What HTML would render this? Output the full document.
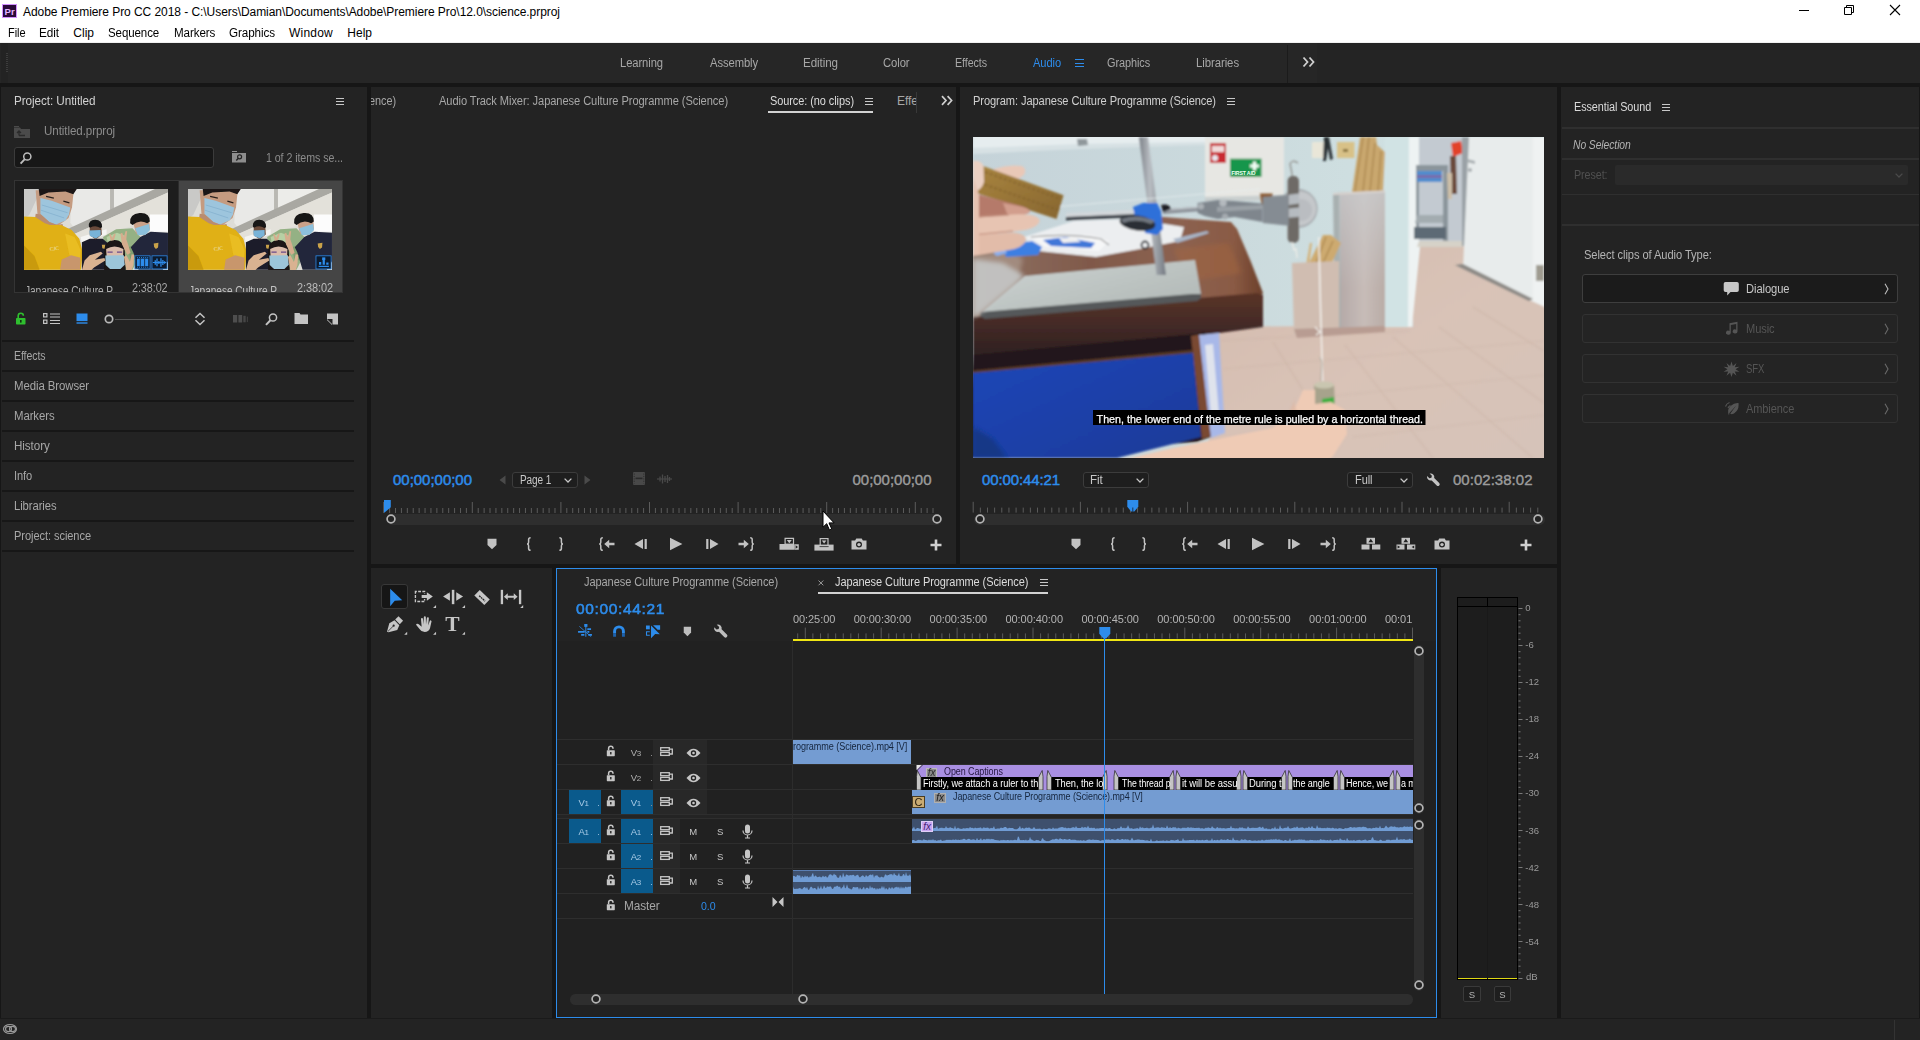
<!DOCTYPE html>
<html lang="en"><head><meta charset="utf-8"><title>Adobe Premiere Pro CC 2018 - science.prproj</title>
<style>
html,body{margin:0;padding:0;background:#161616;}
body{width:1920px;height:1040px;position:relative;overflow:hidden;font-family:"Liberation Sans",sans-serif;}
.t{position:absolute;white-space:nowrap;display:block;}
svg{overflow:visible;display:block;}
</style></head><body>
<div style="position:absolute;left:0px;top:0px;width:1920px;height:43px;background:#ffffff;"></div>
<div style="position:absolute;left:0px;top:42px;width:1920px;height:1px;background:#f0f0f0;"></div>
<div style="position:absolute;left:2px;top:4px;width:15px;height:14px;background:#2a0a3a;border:1px solid #d291ff;box-sizing:border-box;"></div>
<span class="t" style="left:4.50px;top:7px;font-size:9.5px;line-height:10.92px;color:#e3b6ff;letter-spacing:0.233px;font-weight:bold;">Pr</span>
<span class="t" style="left:23.00px;top:6px;font-size:12px;line-height:13.79px;color:#000;letter-spacing:-0.057px;">Adobe Premiere Pro CC 2018 - C:\Users\Damian\Documents\Adobe\Premiere Pro\12.0\science.prproj</span>
<svg style="position:absolute;left:1790px;top:0px;" width="130" height="30" viewBox="0 0 130 30"><path d="M9 10.5h10" stroke="#000" stroke-width="1" fill="none"/><path d="M54.5 7.5h7v7h-7zM56.5 7.5v-2h7v7h-2" stroke="#000" stroke-width="1" fill="none"/><path d="M100 5l10 10M110 5l-10 10" stroke="#000" stroke-width="1.1" fill="none"/></svg>
<span class="t" style="left:8.00px;top:27px;font-size:12px;line-height:13.79px;color:#000;letter-spacing:-0.073px;transform:scaleX(0.9188);transform-origin:0 0;">File</span>
<span class="t" style="left:39.00px;top:27px;font-size:12px;line-height:13.79px;color:#000;letter-spacing:-0.078px;transform:scaleX(0.9819);transform-origin:0 0;">Edit</span>
<span class="t" style="left:73.30px;top:27px;font-size:12px;line-height:13.79px;color:#000;letter-spacing:0.007px;">Clip</span>
<span class="t" style="left:108.30px;top:27px;font-size:12px;line-height:13.79px;color:#000;letter-spacing:-0.101px;transform:scaleX(0.9598);transform-origin:0 0;">Sequence</span>
<span class="t" style="left:173.50px;top:27px;font-size:12px;line-height:13.79px;color:#000;letter-spacing:-0.093px;transform:scaleX(0.9675);transform-origin:0 0;">Markers</span>
<span class="t" style="left:229.00px;top:27px;font-size:12px;line-height:13.79px;color:#000;letter-spacing:-0.090px;transform:scaleX(0.9725);transform-origin:0 0;">Graphics</span>
<span class="t" style="left:289.00px;top:27px;font-size:12px;line-height:13.79px;color:#000;letter-spacing:0.220px;">Window</span>
<span class="t" style="left:347.30px;top:27px;font-size:12px;line-height:13.79px;color:#000;">Help</span>
<div style="position:absolute;left:0px;top:43px;width:1920px;height:40px;background:#262626;"></div>
<div style="position:absolute;left:1px;top:43px;width:7px;height:40px;background:#232323;"></div>
<div style="position:absolute;left:1317px;top:43px;width:603px;height:40px;background:#242424;"></div>
<div style="position:absolute;left:1287px;top:45px;width:1px;height:38px;background:#1b1b1b;"></div>
<div style="position:absolute;left:6px;top:53px;width:2px;height:1px;background:#3c3c3c;"></div>
<div style="position:absolute;left:6px;top:55px;width:2px;height:1px;background:#3c3c3c;"></div>
<div style="position:absolute;left:6px;top:57px;width:2px;height:1px;background:#3c3c3c;"></div>
<div style="position:absolute;left:6px;top:59px;width:2px;height:1px;background:#3c3c3c;"></div>
<div style="position:absolute;left:6px;top:61px;width:2px;height:1px;background:#3c3c3c;"></div>
<div style="position:absolute;left:6px;top:63px;width:2px;height:1px;background:#3c3c3c;"></div>
<div style="position:absolute;left:6px;top:65px;width:2px;height:1px;background:#3c3c3c;"></div>
<div style="position:absolute;left:6px;top:67px;width:2px;height:1px;background:#3c3c3c;"></div>
<div style="position:absolute;left:6px;top:69px;width:2px;height:1px;background:#3c3c3c;"></div>
<div style="position:absolute;left:6px;top:71px;width:2px;height:1px;background:#3c3c3c;"></div>
<span class="t" style="left:620.00px;top:57px;font-size:12px;line-height:13.79px;color:#a7a7a7;letter-spacing:-0.088px;transform:scaleX(0.9346);transform-origin:0 0;">Learning</span>
<span class="t" style="left:710.00px;top:57px;font-size:12px;line-height:13.79px;color:#a7a7a7;letter-spacing:-0.098px;transform:scaleX(0.9369);transform-origin:0 0;">Assembly</span>
<span class="t" style="left:803.00px;top:57px;font-size:12px;line-height:13.79px;color:#a7a7a7;letter-spacing:-0.079px;transform:scaleX(0.9684);transform-origin:0 0;">Editing</span>
<span class="t" style="left:882.50px;top:57px;font-size:12px;line-height:13.79px;color:#a7a7a7;letter-spacing:-0.086px;transform:scaleX(0.9382);transform-origin:0 0;">Color</span>
<span class="t" style="left:955.00px;top:57px;font-size:12px;line-height:13.79px;color:#a7a7a7;letter-spacing:-0.078px;transform:scaleX(0.8910);transform-origin:0 0;">Effects</span>
<span class="t" style="left:1033.00px;top:57px;font-size:12px;line-height:13.79px;color:#2d8ceb;letter-spacing:-0.092px;transform:scaleX(0.9262);transform-origin:0 0;">Audio</span>
<span class="t" style="left:1107.00px;top:57px;font-size:12px;line-height:13.79px;color:#a7a7a7;letter-spacing:-0.090px;transform:scaleX(0.9091);transform-origin:0 0;">Graphics</span>
<span class="t" style="left:1196.00px;top:57px;font-size:12px;line-height:13.79px;color:#a7a7a7;letter-spacing:-0.077px;transform:scaleX(0.9486);transform-origin:0 0;">Libraries</span>
<div style="position:absolute;left:1075px;top:59.0px;width:9px;height:1.2px;background:#2d8ceb;"></div>
<div style="position:absolute;left:1075px;top:62.5px;width:9px;height:1.2px;background:#2d8ceb;"></div>
<div style="position:absolute;left:1075px;top:66.0px;width:9px;height:1.2px;background:#2d8ceb;"></div>
<svg style="position:absolute;left:1302px;top:56px;" width="14" height="12" viewBox="0 0 14 12"><path d="M1.5 1.5l4 4.5-4 4.5M7.5 1.5l4 4.5-4 4.5" stroke="#cfcfcf" stroke-width="1.8" fill="none"/></svg>
<div style="position:absolute;left:1px;top:87px;width:366px;height:931px;background:#232323;"></div>
<div style="position:absolute;left:371px;top:87px;width:585px;height:477px;background:#232323;"></div>
<div style="position:absolute;left:960px;top:87px;width:597px;height:477px;background:#232323;"></div>
<div style="position:absolute;left:1561px;top:87px;width:358px;height:931px;background:#232323;"></div>
<div style="position:absolute;left:371px;top:568px;width:181px;height:450px;background:#232323;"></div>
<div style="position:absolute;left:556px;top:568px;width:881px;height:450px;background:#232323;"></div>
<div style="position:absolute;left:1441px;top:568px;width:116px;height:450px;background:#232323;"></div>
<div style="position:absolute;left:0px;top:1018px;width:1920px;height:22px;background:#232323;"></div>
<div style="position:absolute;left:0px;top:1018px;width:1920px;height:1px;background:#1a1a1a;"></div>
<div style="position:absolute;left:1894px;top:1020px;width:1px;height:20px;background:#333;"></div>
<svg style="position:absolute;left:2px;top:1021px;" width="18" height="14" viewBox="0 0 18 14"><ellipse cx="8" cy="8" rx="6.5" ry="4.5" fill="none" stroke="#9a9a9a" stroke-width="1.2"/><ellipse cx="6.5" cy="8" rx="3" ry="2.6" fill="none" stroke="#9a9a9a" stroke-width="1.1"/><ellipse cx="10.5" cy="8" rx="3" ry="2.6" fill="none" stroke="#9a9a9a" stroke-width="1.1"/></svg>
<span class="t" style="left:14.00px;top:95px;font-size:12px;line-height:13.79px;color:#d2d2d2;letter-spacing:-0.075px;transform:scaleX(0.9768);transform-origin:0 0;">Project: Untitled</span>
<div style="position:absolute;left:335.5px;top:98px;width:8.5px;height:1.2px;background:#c8c8c8;"></div>
<div style="position:absolute;left:335.5px;top:101px;width:8.5px;height:1.2px;background:#c8c8c8;"></div>
<div style="position:absolute;left:335.5px;top:104px;width:8.5px;height:1.2px;background:#c8c8c8;"></div>
<svg style="position:absolute;left:14px;top:126px;" width="16" height="12" viewBox="0 0 16 12"><path d="M0 1.5h6l1 1.5h9v9h-16z" fill="#4b4b4b"/><path d="M0 0h5v1h-5z" fill="#4b4b4b"/><path d="M5 9.5v-4M3 7l2-2 2 2M5 9.5h6" stroke="#2a2a2a" stroke-width="1.3" fill="none"/></svg>
<span class="t" style="left:44.00px;top:125px;font-size:12px;line-height:13.79px;color:#8c8c8c;letter-spacing:-0.075px;transform:scaleX(0.9649);transform-origin:0 0;">Untitled.prproj</span>
<div style="position:absolute;left:14px;top:147px;width:200px;height:21px;background:#171717;border:1px solid #3b3b3b;border-radius:3px;box-sizing:border-box;"></div>
<svg style="position:absolute;left:19px;top:151px;" width="14" height="14" viewBox="0 0 14 14"><circle cx="8.3" cy="5.5" r="3.6" fill="none" stroke="#bdbdbd" stroke-width="1.5"/><path d="M5.8 8.2l-4.2 4.4" stroke="#bdbdbd" stroke-width="1.9" fill="none"/></svg>
<svg style="position:absolute;left:232px;top:151px;" width="14" height="12" viewBox="0 0 14 12"><path d="M0 0h5v1h-5zM0 2h14v9.5h-14z" fill="#8d8d8d"/><circle cx="7.6" cy="5.8" r="2" fill="none" stroke="#232323" stroke-width="1.2"/><path d="M6.3 7.3l-2 2.2" stroke="#232323" stroke-width="1.3"/></svg>
<span class="t" style="left:266.00px;top:152px;font-size:12px;line-height:13.79px;color:#8c8c8c;letter-spacing:-0.073px;transform:scaleX(0.8880);transform-origin:0 0;">1 of 2 items se...</span>
<div style="position:absolute;left:14px;top:179.5px;width:329px;height:113px;background:#1d1d1d;border:1px solid #343434;box-sizing:border-box;"></div>
<div style="position:absolute;left:179px;top:180.5px;width:163px;height:111.5px;background:#454545;"></div>
<div style="position:absolute;left:178px;top:180.5px;width:1px;height:111.5px;background:#2c2c2c;"></div>
<svg style="position:absolute;left:24px;top:189px;overflow:hidden;" width="144" height="81" viewBox="45 45 1665 937"><defs><filter id="tb1" x="-5%" y="-5%" width="110%" height="110%"><feGaussianBlur stdDeviation="5"/></filter><clipPath id="tc1"><rect x="45" y="45" width="1665" height="937"/></clipPath></defs><g clip-path="url(#tc1)"><g filter="url(#tb1)"><rect x="0" y="0" width="1760" height="1040" fill="#dddcd7"/><path d="M45 45h200l-140 300-60 40z" fill="#c9c9c7"/><path d="M600 45h440v290l-400 180-60-80z" fill="#e9e9e7"/><path d="M1085 45h480l-480 215z" fill="#ecece9"/><path d="M1040 45h45v225l-45 20z" fill="#b9b8b3"/><path d="M1560 45h150v40l-1130 500-50-70z" fill="#a9a8a2"/><path d="M1710 85v250l-1000 330-130-80z" fill="#e3e1da"/><path d="M1500 340h210v200h-210z" fill="#fcfcfc"/><path d="M700 600l300-90 0 60-290 90z" fill="#f4f4f2"/><path d="M960 600l150-90 190-10 100 110-40 250-60 120h-320z" fill="#94b184"/><path d="M1000 600l120-50 100 40-60 90-140 20z" fill="#b7d0a4"/><path d="M1250 720l110-50 20 150-100 80z" fill="#7f9f6f"/><path d="M180 60h440l-20 200-40 120-110 80-240 10z" fill="#c59b80"/><path d="M215 45h440l-40 60-90-30-200 10-100 40z" fill="#1a1716"/><path d="M300 130l90 20M500 185l70 20" stroke="#2a211d" stroke-width="14"/><path d="M235 150l130 30 215 80-15 80-40 70-110 45-80-30-100-90z" fill="#9dc5dd"/><path d="M250 230l300 90M240 290l270 90" stroke="#86b2cf" stroke-width="10" fill="none"/><path d="M180 330l60 10 100 90 90 30 60-10 10 40-180 10-150-100z" fill="#b98c70"/><path d="M45 362l130 8 110 70 60 22 130-2 120 60 90 100 38 150-18 210h-660z" fill="#e0b012"/><path d="M45 700l120 120 60 160h-180z" fill="#c99a0e"/><path d="M520 560l110 40 70 150-10 120-120-60z" fill="#e9bd22"/><path d="M480 860l110-50 110 30-8 140h-230z" fill="#c8966c"/><path d="M715 660l90-40 150 0 70 60 30 300h-340z" fill="#1b1c29"/><path d="M805 440h130l10 130-70 60-70-50z" fill="#6b4b3b"/><path d="M795 480q-5-80 75-78t78 85l-20 10q-55-40-120-5z" fill="#141213"/><path d="M800 525l130-5 2 60-55 38-70-28z" fill="#78b3d8"/><path d="M945 690l40 0-5 50-30-10z" fill="#c8a14a"/><path d="M1280 720l110-120 120-60 200 10v330l-60 100h-280l-60-200z" fill="#21253b"/><path d="M1300 400l190-20 10 120-60 80-100-20z" fill="#caa189"/><path d="M1272 440q-10-110 110-118t118 100l-30 20q-90-50-170 20z" fill="#151314"/><path d="M1330 500l160-50 12 70-50 55-90 5z" fill="#8cc0dc"/><path d="M1545 675l55-8-5 55-25 18-20-25z" fill="#c9a24a"/><path d="M970 800q0-165 120-165t122 160l10 190h-250z" fill="#1a1617"/><path d="M995 740q95-60 200 0l-5 90h-190z" fill="#dbbcab"/><path d="M985 815l215-5 10 110-50 50h-120l-50-45z" fill="#9cc5d9"/><path d="M1010 775h60M1120 775h60" stroke="#6a4a8a" stroke-width="14"/><path d="M715 982l30-110 60-60 130-40 20 20-90 70 110-20 10 30-130 80-30 30z" fill="#d9b291"/><path d="M1200 830l30-20 40 80 20-90 30 5-10 120-20 60h-60z" fill="#d9b291"/><path d="M1160 560l20-10 20 50 20-70 18 5-10 90 20 60 30 100-40 20-60-120z" fill="#d5ad8d"/><path d="M1030 570l15-5 20 45 25-50 15 8-20 70-35 5z" fill="#d5ad8d"/></g><text x="345" y="760" font-size="62" fill="#efe6c8" font-family="Liberation Serif, serif" transform="rotate(-6 345 760)">CJC</text><rect x="1328" y="818" width="175" height="152" fill="#0c1a2e" stroke="#2d8ceb" stroke-width="9"/><rect x="1350" y="850" width="132" height="88" fill="#2d8ceb"/><path d="M1390 850v88M1440 850v88" stroke="#0c1a2e" stroke-width="9"/><path d="M1350 838h132M1350 950h132" stroke="#2d8ceb" stroke-width="10" stroke-dasharray="13 11"/><rect x="1525" y="818" width="175" height="152" fill="#0c1a2e" stroke="#2d8ceb" stroke-width="9"/><path d="M1535 895h155" stroke="#2d8ceb" stroke-width="12"/><path d="M1563 870v50M1583 850v90M1605 878v34M1629 845v100M1651 865v60M1671 880v30" stroke="#2d8ceb" stroke-width="15"/></g></svg>
<svg style="position:absolute;left:188px;top:189px;overflow:hidden;" width="144" height="81" viewBox="45 45 1665 937"><defs><filter id="tb2" x="-5%" y="-5%" width="110%" height="110%"><feGaussianBlur stdDeviation="5"/></filter><clipPath id="tc2"><rect x="45" y="45" width="1665" height="937"/></clipPath></defs><g clip-path="url(#tc2)"><g filter="url(#tb2)"><rect x="0" y="0" width="1760" height="1040" fill="#dddcd7"/><path d="M45 45h200l-140 300-60 40z" fill="#c9c9c7"/><path d="M600 45h440v290l-400 180-60-80z" fill="#e9e9e7"/><path d="M1085 45h480l-480 215z" fill="#ecece9"/><path d="M1040 45h45v225l-45 20z" fill="#b9b8b3"/><path d="M1560 45h150v40l-1130 500-50-70z" fill="#a9a8a2"/><path d="M1710 85v250l-1000 330-130-80z" fill="#e3e1da"/><path d="M1500 340h210v200h-210z" fill="#fcfcfc"/><path d="M700 600l300-90 0 60-290 90z" fill="#f4f4f2"/><path d="M960 600l150-90 190-10 100 110-40 250-60 120h-320z" fill="#94b184"/><path d="M1000 600l120-50 100 40-60 90-140 20z" fill="#b7d0a4"/><path d="M1250 720l110-50 20 150-100 80z" fill="#7f9f6f"/><path d="M180 60h440l-20 200-40 120-110 80-240 10z" fill="#c59b80"/><path d="M215 45h440l-40 60-90-30-200 10-100 40z" fill="#1a1716"/><path d="M300 130l90 20M500 185l70 20" stroke="#2a211d" stroke-width="14"/><path d="M235 150l130 30 215 80-15 80-40 70-110 45-80-30-100-90z" fill="#9dc5dd"/><path d="M250 230l300 90M240 290l270 90" stroke="#86b2cf" stroke-width="10" fill="none"/><path d="M180 330l60 10 100 90 90 30 60-10 10 40-180 10-150-100z" fill="#b98c70"/><path d="M45 362l130 8 110 70 60 22 130-2 120 60 90 100 38 150-18 210h-660z" fill="#e0b012"/><path d="M45 700l120 120 60 160h-180z" fill="#c99a0e"/><path d="M520 560l110 40 70 150-10 120-120-60z" fill="#e9bd22"/><path d="M480 860l110-50 110 30-8 140h-230z" fill="#c8966c"/><path d="M715 660l90-40 150 0 70 60 30 300h-340z" fill="#1b1c29"/><path d="M805 440h130l10 130-70 60-70-50z" fill="#6b4b3b"/><path d="M795 480q-5-80 75-78t78 85l-20 10q-55-40-120-5z" fill="#141213"/><path d="M800 525l130-5 2 60-55 38-70-28z" fill="#78b3d8"/><path d="M945 690l40 0-5 50-30-10z" fill="#c8a14a"/><path d="M1280 720l110-120 120-60 200 10v330l-60 100h-280l-60-200z" fill="#21253b"/><path d="M1300 400l190-20 10 120-60 80-100-20z" fill="#caa189"/><path d="M1272 440q-10-110 110-118t118 100l-30 20q-90-50-170 20z" fill="#151314"/><path d="M1330 500l160-50 12 70-50 55-90 5z" fill="#8cc0dc"/><path d="M1545 675l55-8-5 55-25 18-20-25z" fill="#c9a24a"/><path d="M970 800q0-165 120-165t122 160l10 190h-250z" fill="#1a1617"/><path d="M995 740q95-60 200 0l-5 90h-190z" fill="#dbbcab"/><path d="M985 815l215-5 10 110-50 50h-120l-50-45z" fill="#9cc5d9"/><path d="M1010 775h60M1120 775h60" stroke="#6a4a8a" stroke-width="14"/><path d="M715 982l30-110 60-60 130-40 20 20-90 70 110-20 10 30-130 80-30 30z" fill="#d9b291"/><path d="M1200 830l30-20 40 80 20-90 30 5-10 120-20 60h-60z" fill="#d9b291"/><path d="M1160 560l20-10 20 50 20-70 18 5-10 90 20 60 30 100-40 20-60-120z" fill="#d5ad8d"/><path d="M1030 570l15-5 20 45 25-50 15 8-20 70-35 5z" fill="#d5ad8d"/></g><text x="345" y="760" font-size="62" fill="#efe6c8" font-family="Liberation Serif, serif" transform="rotate(-6 345 760)">CJC</text><rect x="1525" y="818" width="175" height="152" fill="#0c1a2e" stroke="#2d8ceb" stroke-width="9"/><path d="M1555 940h120" stroke="#2d8ceb" stroke-width="14"/><path d="M1573 920v-30M1615 920v-70M1657 920v-24" stroke="#2d8ceb" stroke-width="26"/><rect x="1597" y="836" width="36" height="30" fill="#2d8ceb"/></g></svg>
<div style="position:absolute;left:15px;top:181px;width:327px;height:111px;overflow:hidden;">
<span class="t" style="left:10.00px;top:104px;font-size:12px;line-height:13.79px;color:#b0b0b0;letter-spacing:-0.081px;transform:scaleX(0.8471);transform-origin:0 0;">Japanese Culture P...</span>
<span class="t" style="left:117.00px;top:101px;font-size:12px;line-height:13.79px;color:#a7a7a7;letter-spacing:-0.086px;transform:scaleX(0.9002);transform-origin:0 0;">2:38:02</span>
<span class="t" style="left:174.00px;top:104px;font-size:12px;line-height:13.79px;color:#c2c2c2;letter-spacing:-0.081px;transform:scaleX(0.8471);transform-origin:0 0;">Japanese Culture P...</span>
<span class="t" style="left:282.00px;top:101px;font-size:12px;line-height:13.79px;color:#bcbcbc;letter-spacing:-0.086px;transform:scaleX(0.9128);transform-origin:0 0;">2:38:02</span>
</div>
<svg style="position:absolute;left:15px;top:312px;" width="12" height="13" viewBox="0 0 12 13"><rect x="1" y="6" width="9.5" height="6.5" rx="0.8" fill="#2fbf2f"/><path d="M3.2 6v-2.2a2.6 2.6 0 0 1 5.2 0" fill="none" stroke="#2fbf2f" stroke-width="1.6"/><rect x="5" y="8" width="1.6" height="2.6" fill="#12330f"/></svg>
<svg style="position:absolute;left:43px;top:313px;" width="18" height="12" viewBox="0 0 18 12"><rect x="0.6" y="0.6" width="3.3" height="3.3" fill="none" stroke="#c4c4c4" stroke-width="1.2"/><rect x="0.6" y="7.1" width="3.3" height="3.3" fill="none" stroke="#c4c4c4" stroke-width="1.2"/><path d="M7 1h10M7 4h10M7 7.5h10M7 10.5h10" stroke="#c4c4c4" stroke-width="1.2"/></svg>
<svg style="position:absolute;left:76px;top:313px;" width="12" height="12" viewBox="0 0 12 12"><rect x="0.5" y="0.5" width="11" height="7.6" fill="#2d8ceb"/><rect x="0.5" y="9.3" width="11" height="1.4" fill="#2d8ceb"/></svg>
<div style="position:absolute;left:115px;top:318.5px;width:57px;height:1.2px;background:#525252;"></div>
<svg style="position:absolute;left:103px;top:313px;" width="12" height="12" viewBox="0 0 12 12"><circle cx="6" cy="6" r="3.7" fill="#232323" stroke="#b9b9b9" stroke-width="1.7"/></svg>
<svg style="position:absolute;left:194px;top:312px;" width="12" height="14" viewBox="0 0 12 14"><path d="M1.5 5.8l4.5-4.3 4.5 4.3M1.5 8.2l4.5 4.3 4.5-4.3" fill="none" stroke="#c4c4c4" stroke-width="1.5"/></svg>
<svg style="position:absolute;left:233px;top:314px;" width="17" height="10" viewBox="0 0 17 10"><rect x="0" y="1" width="4.2" height="7.5" fill="#4e4e4e"/><rect x="5.4" y="1" width="3.8" height="7.5" fill="#4e4e4e"/><rect x="10.3" y="1.8" width="2.4" height="6.5" fill="#464646"/><rect x="13.8" y="2.6" width="1.2" height="5.5" fill="#3e3e3e"/></svg>
<svg style="position:absolute;left:264px;top:312px;" width="15" height="15" viewBox="0 0 15 15"><circle cx="9" cy="5.5" r="3.6" fill="none" stroke="#c4c4c4" stroke-width="1.5"/><path d="M6.4 8.3l-4.4 4.6" stroke="#c4c4c4" stroke-width="2"/></svg>
<svg style="position:absolute;left:294px;top:312px;" width="15" height="13" viewBox="0 0 15 13"><path d="M0.5 1h5l1 1.5h7.5v9.5h-13.5z" fill="#c4c4c4"/></svg>
<svg style="position:absolute;left:326px;top:313px;" width="13" height="12" viewBox="0 0 13 12"><path d="M1 0.5h11v11h-5.5v-5.5h-5.5z" fill="#c4c4c4"/><path d="M1 6.6l5 4.9" stroke="#c4c4c4" stroke-width="1"/></svg>
<div style="position:absolute;left:2px;top:339.6px;width:352px;height:2px;background:#171717;"></div>
<span class="t" style="left:14.00px;top:350px;font-size:12px;line-height:13.79px;color:#a7a7a7;letter-spacing:-0.078px;transform:scaleX(0.8770);transform-origin:0 0;">Effects</span>
<div style="position:absolute;left:2px;top:369.6px;width:352px;height:2px;background:#171717;"></div>
<span class="t" style="left:14.00px;top:380px;font-size:12px;line-height:13.79px;color:#a7a7a7;letter-spacing:-0.092px;transform:scaleX(0.9514);transform-origin:0 0;">Media Browser</span>
<div style="position:absolute;left:2px;top:399.6px;width:352px;height:2px;background:#171717;"></div>
<span class="t" style="left:14.00px;top:410px;font-size:12px;line-height:13.79px;color:#a7a7a7;letter-spacing:-0.093px;transform:scaleX(0.9488);transform-origin:0 0;">Markers</span>
<div style="position:absolute;left:2px;top:429.6px;width:352px;height:2px;background:#171717;"></div>
<span class="t" style="left:14.00px;top:440px;font-size:12px;line-height:13.79px;color:#a7a7a7;letter-spacing:-0.080px;transform:scaleX(0.9707);transform-origin:0 0;">History</span>
<div style="position:absolute;left:2px;top:459.6px;width:352px;height:2px;background:#171717;"></div>
<span class="t" style="left:14.00px;top:470px;font-size:12px;line-height:13.79px;color:#a7a7a7;letter-spacing:-0.075px;transform:scaleX(0.9231);transform-origin:0 0;">Info</span>
<div style="position:absolute;left:2px;top:489.6px;width:352px;height:2px;background:#171717;"></div>
<span class="t" style="left:14.00px;top:500px;font-size:12px;line-height:13.79px;color:#a7a7a7;letter-spacing:-0.077px;transform:scaleX(0.9375);transform-origin:0 0;">Libraries</span>
<div style="position:absolute;left:2px;top:519.6px;width:352px;height:2px;background:#171717;"></div>
<span class="t" style="left:14.00px;top:530px;font-size:12px;line-height:13.79px;color:#a7a7a7;letter-spacing:-0.079px;transform:scaleX(0.9229);transform-origin:0 0;">Project: science</span>
<div style="position:absolute;left:2px;top:549.6px;width:352px;height:2px;background:#171717;"></div>
<div style="position:absolute;left:371px;top:90px;width:26px;height:24px;overflow:hidden;">
<span class="t" style="left:-146.00px;top:5px;font-size:12px;line-height:13.79px;color:#a7a7a7;letter-spacing:-0.082px;transform:scaleX(0.9079);transform-origin:0 0;">Effect Controls: Japanese (Science)</span>
</div>
<span class="t" style="left:439.00px;top:95px;font-size:12px;line-height:13.79px;color:#a7a7a7;letter-spacing:-0.086px;transform:scaleX(0.9261);transform-origin:0 0;">Audio Track Mixer: Japanese Culture Programme (Science)</span>
<span class="t" style="left:770.00px;top:95px;font-size:12px;line-height:13.79px;color:#dcdcdc;letter-spacing:-0.078px;transform:scaleX(0.9133);transform-origin:0 0;">Source: (no clips)</span>
<div style="position:absolute;left:864.5px;top:98px;width:8.5px;height:1.2px;background:#c8c8c8;"></div>
<div style="position:absolute;left:864.5px;top:101px;width:8.5px;height:1.2px;background:#c8c8c8;"></div>
<div style="position:absolute;left:864.5px;top:104px;width:8.5px;height:1.2px;background:#c8c8c8;"></div>
<div style="position:absolute;left:768px;top:110.5px;width:105px;height:2px;background:#d2d2d2;"></div>
<div style="position:absolute;left:897px;top:90px;width:19px;height:24px;overflow:hidden;">
<span class="t" style="left:0.00px;top:5px;font-size:12px;line-height:13.79px;color:#a7a7a7;letter-spacing:-0.066px;">Effects</span>
</div>
<div style="position:absolute;left:916px;top:92px;width:1px;height:21px;background:#383838;"></div>
<svg style="position:absolute;left:941px;top:95px;" width="12" height="11" viewBox="0 0 12 11"><path d="M1 1.2l4 4.3-4 4.3M6.6 1.2l4 4.3-4 4.3" stroke="#cfcfcf" stroke-width="1.7" fill="none"/></svg>
<span class="t" style="left:393.00px;top:471px;font-size:15px;line-height:17.23px;color:#2d8ceb;letter-spacing:-0.022px;-webkit-text-stroke:0.5px #2d8ceb;">00;00;00;00</span>
<svg style="position:absolute;left:499px;top:475px;" width="7" height="10" viewBox="0 0 7 10"><path d="M6.5 0.5v9l-6-4.5z" fill="#4a4a4a"/></svg>
<div style="position:absolute;left:511.5px;top:471.5px;width:66.5px;height:16.5px;background:#1e1e1e;border:1px solid #3c3c3c;border-radius:3px;box-sizing:border-box;"></div>
<span class="t" style="left:519.70px;top:474px;font-size:12px;line-height:13.79px;color:#c8c8c8;letter-spacing:-0.095px;transform:scaleX(0.8355);transform-origin:0 0;">Page 1</span>
<svg style="position:absolute;left:564px;top:477.75px;" width="8" height="5" viewBox="0 0 8 5"><path d="M0.6 0.6l3.4 3.4 3.4-3.4" fill="none" stroke="#c8c8c8" stroke-width="1.3"/></svg>
<svg style="position:absolute;left:584px;top:475px;" width="7" height="10" viewBox="0 0 7 10"><path d="M0.5 0.5v9l6-4.5z" fill="#4a4a4a"/></svg>
<svg style="position:absolute;left:633px;top:472px;" width="12" height="13" viewBox="0 0 12 13"><rect x="0" y="0" width="12" height="13" rx="1" fill="#494949"/><rect x="2.5" y="5.6" width="7" height="1.6" fill="#2a2a2a"/><path d="M1.2 1.5v10M10.8 1.5v10" stroke="#2a2a2a" stroke-width="0.9" stroke-dasharray="1.2 1.2"/></svg>
<svg style="position:absolute;left:657px;top:474px;" width="15" height="10" viewBox="0 0 15 10"><path d="M0 5h15" stroke="#494949" stroke-width="1.2"/><path d="M3 2.5v5M5.5 0.5v9M8 2v6M10.5 1v8M12.5 3v4" stroke="#494949" stroke-width="1.3"/></svg>
<span class="t" style="left:852.50px;top:471px;font-size:15px;line-height:17.23px;color:#9c9c9c;letter-spacing:-0.022px;-webkit-text-stroke:0.4px #9c9c9c;">00;00;00;00</span>
<svg style="position:absolute;left:0px;top:0px;pointer-events:none;" width="1920" height="1040" viewBox="0 0 1920 1040"><path d="M383.70 502.0V513.0M389.61 508.0V513.0M395.51 508.0V513.0M401.42 508.0V513.0M407.33 508.0V513.0M413.23 508.0V513.0M419.14 508.0V513.0M425.05 508.0V513.0M430.95 508.0V513.0M436.86 508.0V513.0M442.77 508.0V513.0M448.67 508.0V513.0M454.58 508.0V513.0M460.49 508.0V513.0M466.39 508.0V513.0M472.30 502.0V513.0M478.21 508.0V513.0M484.11 508.0V513.0M490.02 508.0V513.0M495.93 508.0V513.0M501.83 508.0V513.0M507.74 508.0V513.0M513.65 508.0V513.0M519.55 508.0V513.0M525.46 508.0V513.0M531.37 508.0V513.0M537.27 508.0V513.0M543.18 508.0V513.0M549.09 508.0V513.0M554.99 508.0V513.0M560.90 502.0V513.0M566.81 508.0V513.0M572.71 508.0V513.0M578.62 508.0V513.0M584.53 508.0V513.0M590.43 508.0V513.0M596.34 508.0V513.0M602.25 508.0V513.0M608.15 508.0V513.0M614.06 508.0V513.0M619.97 508.0V513.0M625.87 508.0V513.0M631.78 508.0V513.0M637.69 508.0V513.0M643.59 508.0V513.0M649.50 502.0V513.0M655.41 508.0V513.0M661.31 508.0V513.0M667.22 508.0V513.0M673.13 508.0V513.0M679.03 508.0V513.0M684.94 508.0V513.0M690.85 508.0V513.0M696.75 508.0V513.0M702.66 508.0V513.0M708.57 508.0V513.0M714.47 508.0V513.0M720.38 508.0V513.0M726.29 508.0V513.0M732.19 508.0V513.0M738.10 502.0V513.0M744.01 508.0V513.0M749.91 508.0V513.0M755.82 508.0V513.0M761.73 508.0V513.0M767.63 508.0V513.0M773.54 508.0V513.0M779.45 508.0V513.0M785.35 508.0V513.0M791.26 508.0V513.0M797.17 508.0V513.0M803.07 508.0V513.0M808.98 508.0V513.0M814.89 508.0V513.0M820.79 508.0V513.0M826.70 502.0V513.0M832.61 508.0V513.0M838.51 508.0V513.0M844.42 508.0V513.0M850.33 508.0V513.0M856.23 508.0V513.0M862.14 508.0V513.0M868.05 508.0V513.0M873.95 508.0V513.0M879.86 508.0V513.0M885.77 508.0V513.0M891.67 508.0V513.0M897.58 508.0V513.0M903.49 508.0V513.0M909.39 508.0V513.0M915.30 502.0V513.0M921.21 508.0V513.0M927.11 508.0V513.0M933.02 508.0V513.0" stroke="#5c5c5c" stroke-width="1" fill="none"/></svg>
<svg style="position:absolute;left:384px;top:500px;" width="8" height="13" viewBox="0 0 8 13"><path d="M0 0h6.8v7.2l-6.2 5.4h-0.6z" fill="#2d8ceb"/></svg>
<div style="position:absolute;left:387px;top:513.9px;width:555px;height:11px;background:#2e2e2e;border-radius:5.5px;"></div>
<svg style="position:absolute;left:385px;top:513.4px;" width="12" height="12" viewBox="0 0 12 12"><circle cx="6" cy="6" r="3.9" fill="#232323" stroke="#b4b4b4" stroke-width="1.7"/></svg>
<svg style="position:absolute;left:931px;top:513.4px;" width="12" height="12" viewBox="0 0 12 12"><circle cx="6" cy="6" r="3.9" fill="#232323" stroke="#b4b4b4" stroke-width="1.7"/></svg>
<svg style="position:absolute;left:486.3px;top:537.8px;" width="12" height="12" viewBox="0 0 12 12"><path d="M1.5 0.8h9v6.2l-4.5 4.2-4.5-4.2z" fill="#c2c2c2"/></svg>
<svg style="position:absolute;left:525px;top:536.8px;" width="8" height="14" viewBox="0 0 8 14"><path d="M5.600 0.800q-2 0-2 1.800v2.600q0 1.800-1.600 1.800q1.600 0 1.600 1.800v2.600q0 1.800 2 1.800" fill="none" stroke="#c2c2c2" stroke-width="1.500"/></svg>
<svg style="position:absolute;left:557px;top:536.8px;" width="8" height="14" viewBox="0 0 8 14"><path d="M2.400 0.800q2 0 2 1.800v2.600q0 1.800 1.600 1.800q-1.600 0-1.600 1.800v2.600q0 1.800-2 1.800" fill="none" stroke="#c2c2c2" stroke-width="1.500"/></svg>
<svg style="position:absolute;left:597.6px;top:536.8px;" width="18" height="14" viewBox="0 0 18 14"><path d="M4.800 0.800q-2 0-2 1.800v2.600q0 1.800-1.600 1.800q1.600 0 1.600 1.800v2.600q0 1.800 2 1.800" fill="none" stroke="#c2c2c2" stroke-width="1.5"/><path d="M6.2 7l5-4.2v2.9h5.3v2.6h-5.3v2.9z" fill="#c2c2c2"/></svg>
<svg style="position:absolute;left:634px;top:537.8px;" width="14" height="12" viewBox="0 0 14 12"><path d="M0.5 6l8.5-5v10z" fill="#c2c2c2"/><rect x="10.6" y="1" width="2.2" height="10" fill="#c2c2c2"/></svg>
<svg style="position:absolute;left:668.8px;top:536.8px;" width="14" height="14" viewBox="0 0 14 14"><path d="M1 0.8l12.4 6.2-12.4 6.2z" fill="#c2c2c2"/></svg>
<svg style="position:absolute;left:704.7px;top:537.8px;" width="14" height="12" viewBox="0 0 14 12"><path d="M13.5 6l-8.5-5v10z" fill="#c2c2c2"/><rect x="1.2" y="1" width="2.2" height="10" fill="#c2c2c2"/></svg>
<svg style="position:absolute;left:736.5px;top:536.8px;" width="18" height="14" viewBox="0 0 18 14"><path d="M13.200 0.800q2 0 2 1.800v2.600q0 1.800 1.600 1.800q-1.600 0-1.600 1.800v2.600q0 1.800-2 1.800" fill="none" stroke="#c2c2c2" stroke-width="1.5"/><path d="M11.8 7l-5-4.2v2.9h-5.3v2.6h5.3v2.9z" fill="#c2c2c2"/></svg>
<svg style="position:absolute;left:778.5px;top:536.8px;" width="20" height="14" viewBox="0 0 20 14"><path d="M0.500 7h5v-6.200h9.600v6.200h0v5.700h-14.600z" fill="#c2c2c2"/><path d="M15.200 7.200h4.600v5.500h-4.600z" fill="#c2c2c2"/><rect x="6.700" y="2" width="7.200" height="4.600" fill="#232323"/><path d="M7.800 3h5l-2.500 3.200z" fill="#c2c2c2"/><path d="M16.600 8.300v3.400l2.400-1.700z" fill="#232323"/></svg>
<svg style="position:absolute;left:814px;top:536.8px;" width="20" height="14" viewBox="0 0 20 14"><path d="M0.400 7.600h19.200v6h-19.200z" fill="#c2c2c2"/><path d="M5.600 1h9v8.400h-9z" fill="#c2c2c2"/><rect x="6.800" y="2.200" width="6.600" height="5.400" fill="#232323"/><path d="M7.800 3.600h4.600l-2.300 3z" fill="#c2c2c2"/><path d="M5.600 9.600h9" stroke="#232323" stroke-width="0.800"/></svg>
<svg style="position:absolute;left:850.8px;top:537.8px;" width="16" height="12" viewBox="0 0 16 12"><path d="M0.5 2.6h3.6l1.2-2h5.4l1.2 2h3.6v8.9h-15z" fill="#c2c2c2"/><circle cx="8" cy="6.6" r="3" fill="#232323"/><circle cx="8" cy="6.6" r="1.7" fill="#c2c2c2"/></svg>
<svg style="position:absolute;left:930.4px;top:539.3px;" width="12" height="12" viewBox="0 0 12 12"><path d="M6 0.5v11M0.5 6h11" stroke="#d0d0d0" stroke-width="2.6"/></svg>
<svg style="position:absolute;left:822.4px;top:509.8px;" width="13" height="21" viewBox="0 0 13 21"><path d="M1 1v16.2l3.700-3.500 2.700 6.200 2.300-1-2.700-6h5.100z" fill="#fff" stroke="#000" stroke-width="1" stroke-linejoin="round"/></svg>
<span class="t" style="left:973.00px;top:95px;font-size:12px;line-height:13.79px;color:#d0d0d0;letter-spacing:-0.089px;transform:scaleX(0.9247);transform-origin:0 0;">Program: Japanese Culture Programme (Science)</span>
<div style="position:absolute;left:1226.7px;top:98px;width:8.5px;height:1.2px;background:#c8c8c8;"></div>
<div style="position:absolute;left:1226.7px;top:101px;width:8.5px;height:1.2px;background:#c8c8c8;"></div>
<div style="position:absolute;left:1226.7px;top:104px;width:8.5px;height:1.2px;background:#c8c8c8;"></div>
<svg style="position:absolute;left:973px;top:137px;overflow:hidden;" width="571" height="321" viewBox="0 0 571 321"><defs>
<filter id="bl1" x="-5%" y="-5%" width="110%" height="110%"><feGaussianBlur stdDeviation="0.9"/></filter>
<filter id="bl2" x="-10%" y="-10%" width="120%" height="120%"><feGaussianBlur stdDeviation="2.2"/></filter>
<filter id="bl4" x="-20%" y="-20%" width="140%" height="140%"><feGaussianBlur stdDeviation="5"/></filter>
<linearGradient id="gwall" x1="0" y1="0" x2="1" y2="0"><stop offset="0" stop-color="#c5d3d9"/><stop offset="0.45" stop-color="#cbdadd"/><stop offset="1" stop-color="#d3e5e5"/></linearGradient>
<linearGradient id="gfloor" x1="0" y1="0" x2="1" y2="1"><stop offset="0" stop-color="#d4bbae"/><stop offset="0.5" stop-color="#d9c3b7"/><stop offset="1" stop-color="#d6c3b9"/></linearGradient>
<linearGradient id="gblue" x1="0" y1="0" x2="1" y2="1"><stop offset="0" stop-color="#1c47b8"/><stop offset="0.6" stop-color="#1b3fa6"/><stop offset="1" stop-color="#1d3c96"/></linearGradient>
<linearGradient id="gtable" x1="0" y1="0" x2="1" y2="0"><stop offset="0" stop-color="#8f7466"/><stop offset="0.4" stop-color="#80594a"/><stop offset="0.72" stop-color="#8c6250"/><stop offset="0.9" stop-color="#8a5a44"/><stop offset="1" stop-color="#6b3f2a"/></linearGradient>
<linearGradient id="gfront" x1="0" y1="0" x2="0" y2="1"><stop offset="0" stop-color="#5a3428"/><stop offset="0.5" stop-color="#432a26"/><stop offset="1" stop-color="#2c1e1f"/></linearGradient>
<linearGradient id="gbin" x1="0" y1="0" x2="1" y2="0"><stop offset="0" stop-color="#a8b0b0"/><stop offset="0.14" stop-color="#a8b0b0"/><stop offset="0.15" stop-color="#b5aaa8"/><stop offset="0.6" stop-color="#c7bcb8"/><stop offset="1" stop-color="#b9aca6"/></linearGradient>
<linearGradient id="grod" x1="0" y1="0" x2="1" y2="0"><stop offset="0" stop-color="#7b8087"/><stop offset="0.4" stop-color="#b9bdc2"/><stop offset="1" stop-color="#747a82"/></linearGradient>
<linearGradient id="gplate" x1="0" y1="0" x2="1" y2="1"><stop offset="0" stop-color="#ced4d3"/><stop offset="0.5" stop-color="#bdc4c2"/><stop offset="1" stop-color="#aeb5b3"/></linearGradient>
<linearGradient id="gruler" x1="0" y1="0" x2="1" y2="1"><stop offset="0" stop-color="#a9853f"/><stop offset="1" stop-color="#876630"/></linearGradient>
<linearGradient id="gbin2" x1="0" y1="0" x2="0" y2="1"><stop offset="0" stop-color="#cbcfd2" stop-opacity="0.65"/><stop offset="0.7" stop-color="#cbcfd2" stop-opacity="0"/></linearGradient>
<clipPath id="pclip"><rect x="0" y="0" width="571" height="321"/></clipPath>
</defs><g clip-path="url(#pclip)"><rect x="-5" y="-5" width="581" height="331" fill="url(#gwall)"/><g filter="url(#bl1)"><path d="M236 190l200-2 10-82 60 0 75 34v196h-345z" fill="url(#gfloor)"/><path d="M0 -2h232v8l-126 3-106 4z" fill="#e6edef"/><path d="M0 11l106-4 126-2v3l-126 4-106 5z" fill="#d7e1e4"/><path d="M104 2h10l1 6-10 1z" fill="#8f979b"/><path d="M232 0h79v62l-79 2z" fill="#e7e7e3"/><path d="M232 60l79-2v5l-79 2z" fill="#c9cfcf"/><rect x="237" y="6" width="16" height="20" fill="#c92b30"/><path d="M239 9h12v6h-12z" fill="#f0dada"/><circle cx="242" cy="21" r="3" fill="#e8e8f0"/><rect x="257" y="21.7" width="31.5" height="18.3" fill="#14964c"/><path d="M280 24.5h3v3h3v3h-3v3h-3v-3h-3v-3h3z" fill="#f4fff6"/></g><text x="258.5" y="38.2" font-size="5.2" font-weight="bold" fill="#f0fff4" font-family="Liberation Sans, sans-serif" textLength="24">FIRST AID</text><g filter="url(#bl1)"><rect x="339" y="5" width="12" height="16" fill="#e9e6d8"/><rect x="364" y="5" width="17.5" height="16" fill="#d8c187"/><path d="M351 0h5l4 22-3 1-2-12-2 13-3 0z" fill="#2c3036"/><rect x="370" y="12" width="5" height="3" fill="#8a7440"/><path d="M412 0h28v190h-30z" fill="#d1e3e4"/><path d="M436 0h11v110l-8 80h-4z" fill="#eef3f3"/><path d="M446 0h45v108h-45z" fill="#c3cad1"/><path d="M446 104h44v6h-46z" fill="#d6d2c8"/><path d="M443 28h32v76h-5v-70h-24v66h-3z" fill="#8b959b"/><rect x="444" y="34" width="25" height="11" fill="#4d8dcf"/><rect x="444" y="38" width="25" height="3" fill="#7a6aa8"/><path d="M444 78h26v8h-28z" fill="#a3acb0"/><path d="M441 90h32v12h-32z" fill="#5d6a74"/><path d="M478 6l10-2 2 12-10 4z" fill="#e2432c"/><path d="M477 19h6l1 38h-6z" fill="#6b4a3a"/><path d="M474 36h5v26h-4z" fill="#cdbfa8"/><path d="M489 0h12v0l-4 109h-8z" fill="#9aa1a6"/><path d="M500 0h76v172l-20-9-66-32 6-131z" fill="#e8ecec"/><path d="M560 0h16v172l-16-8z" fill="#eff2f2"/><path d="M494 22l8 2v3l-8-2zM497 31a2 2 0 1 0 0.1 0z" fill="#a7adb0"/><path d="M482 128l8-1 70 35-4 2z" fill="#8d8a86"/><rect x="563" y="128" width="8" height="16" fill="#9f9b90"/><path d="M387 0h16l1 8 8 7-2 40h-31z" fill="#c9a76e"/><path d="M390 0l-8 54M396 0l-6 54M402 6l-5 48M408 14l-3 40" stroke="#a8844c" stroke-width="1.2" fill="none"/><path d="M360 56l52-2.5v138l-50 1z" fill="url(#gbin)"/><path d="M366 56l46-2.500v138l-46 1z" fill="url(#gbin2)"/><path d="M360 56l52-2.500v2l-52 2.500z" fill="#d9d3cf"/><path d="M336 126l14-28 8 0 10 8-10 22z" fill="#cdaa70"/><path d="M343 126l10-26M350 126l10-22" stroke="#a8844c" stroke-width="1.1"/><path d="M333 128l4-22 2 0-3 22z" fill="#d4b27a"/><path d="M319 126l47-2v69l-45 5z" fill="#d0bdb1"/><path d="M321 192l91-3v6l-88 6z" fill="#b89c92"/><circle cx="325" cy="71.5" r="19.6" fill="#a6aaae"/><circle cx="326" cy="71.5" r="17.3" fill="#c5c8cb"/><circle cx="328" cy="73" r="11" fill="#babdc1"/><path d="M319.500 40q-1-7-2.500-13q2-5 8-1" stroke="#8d8c88" stroke-width="1.200" fill="none"/><rect x="314.600" y="39" width="11.400" height="67" rx="5" fill="#6e6a66"/><path d="M287 56.500h12.600l-0.600 6-10 7z" fill="#8a5a30"/><path d="M190 72.300l36-2.600v4.600l-36 2.600z" fill="#8a9097"/><path d="M190 72.300l36-2.600v1.600l-36 2.600z" fill="#b9bec3"/><path d="M224.600 66l20-3 17 1 28 2.500v18.500l-28-5-17 2-13-3-7-3z" fill="#7f868d"/><path d="M244 70l46-2v4l-46 3z" fill="#9aa0a6"/><circle cx="228" cy="69.500" r="3" fill="#aab0b5"/><circle cx="250" cy="66" r="3.600" fill="#b4b9be"/><circle cx="252" cy="79.500" r="3" fill="#a5abb0"/><path d="M289.800 60l25.900-2v30.800l-25.900-2.800z" fill="#858c93"/><path d="M315.700 57.700l10.300-1.200v10l-10.300 1.500zM315.700 71.500l10.300-1v9.300l-10.300 1z" fill="#b6bbc0"/><path d="M319 105l2 8 2-1 1 9" stroke="#f2efe9" stroke-width="1.2" fill="none"/><path d="M345.800 100l1.400 60 1.200 40 1.200 44" stroke="#f4f2ee" stroke-width="1.500" fill="none"/><path d="M342 190l5 5-4 3" stroke="#f2efe9" stroke-width="1.3" fill="none"/><path d="M347 220l2 6-1 18" stroke="#a9a49a" stroke-width="1" fill="none"/><g stroke="#c4aa9c" stroke-width="0.7" fill="none" opacity="0.75"><path d="M300 205l60 96M372 208l88 113M420 200l140 121M466 190l105 76M500 170l71 44"/><path d="M236 204l200-10M250 232l321-28M330 262l241-24M380 300l191-22" opacity="0.45"/></g><path d="M0 112L60 106L190 80L258 85L264 92L278 125L290 156L284 164L0 202Z" fill="url(#gtable)"/><path d="M200 112l55-6 14 30-52 8z" fill="#a8683c" opacity="0.4" filter="url(#bl2)"/><path d="M0 118l40-4 10 8-10 40-40 20z" fill="#a89488" opacity="0.8" filter="url(#bl2)"/><path d="M0 180l284-24 6 2v32l-58 8-232 24z" fill="url(#gfront)"/><path d="M0 218l222-21 10-2 4 60 4 44-16 6-230 16z" fill="#21181a"/><path d="M0 233.500l219-20.500 1 3.500-220 20.500z" fill="#5a3a28"/><path d="M218 199l11-2 5 60 4 42-9 3z" fill="#7a4a30"/><path d="M0 236l220-20 8 84-84 21h-144z" fill="url(#gblue)"/><path d="M226 198l20-2 6 100-14 5z" fill="#a8b8e8"/><path d="M232 208l8-1 6 70-8 2z" fill="#dfe3ec"/><path d="M0 290l20 12 14 19h-34z" fill="#15306f" opacity="0.6" filter="url(#bl2)"/><path d="M8.700 175.400L52 139L222 123L228 157L225 161L12 180Z" fill="url(#gplate)"/><path d="M8 175l211-18 9 0 0 4-4 3-212 18-5-3z" fill="#55585a"/><path d="M0 122l30 4 22 13-43 36-9 6z" fill="#c9cecf" opacity="0.8" filter="url(#bl2)"/><path d="M51 100l50-16 60-2 50 8-4 14-40 8-44 8-58-6z" fill="#eceef0"/><path d="M58 100l60-2 18 6-10 10-54-4z" fill="#f6f7f8"/><path d="M58 100q40-4 70 2l8 6" stroke="#9a9a9a" stroke-width="1.2" fill="none"/><path d="M70 103l22-3 30 6-4 5-40-2z" fill="#3f77d8"/><path d="M86 101l16 0 6 4-18 1z" fill="#f0f0f0"/><path d="M29 110l30-6 10 6-4 8-32 2z" fill="#3d7fe2"/><path d="M20 116l12-4 2 4-10 3z" fill="#8ab0ee"/><path d="M200 102l34-8 2 2-32 10z" fill="#a9b6c8"/><circle cx="172" cy="108" r="3.5" fill="none" stroke="#22252a" stroke-width="1.8"/><path d="M93 78l70-3.100v5.500l-70 3.100z" fill="#3c4249"/><path d="M93 76l70-3.100v4l-70 3.100z" fill="#d3d7da"/><path d="M166 0h9l18 138h-9.5z" fill="url(#grod)"/><path d="M160 70l10-4 14 0 4 8 2 18-6 6-12-2-2-14-8-2z" fill="#2f6fd9"/><path d="M188 68q8-2 10 4l-8 3z" fill="#1c1e22"/><ellipse cx="164.5" cy="86" rx="18" ry="7.5" fill="#2a2e34" transform="rotate(8 164.5 86)"/><path d="M148 82q16-6 34 2l-4 3q-14-6-28-1z" fill="#71777f"/><path d="M81 70l206-18" stroke="#e9eff0" stroke-width="0.8" fill="none"/><path d="M21 32q14-5 28-3q4 2 3 7q-3 5-8 6L22 41z" fill="#e9c8b7"/><path d="M10 29.100L90.500 58.200L83.600 82L0 55V50z" fill="url(#gruler)"/><path d="M12 35l76 27M7 46l78 27" stroke="#7d5d2a" stroke-width="2.500" opacity="0.500" stroke-dasharray="3 2"/><path d="M0 24q8-1 10.500 5l0.500 16q-2 8-11 11z" fill="#ebd0c2"/><path d="M0 56L45 68Q57 71 57 75Q50 80 35 79L0 82z" fill="#b57a6a"/><path d="M30 66L45 69Q57 71 57 75Q50 80 35 79z" fill="#d9a896" opacity="0.800"/><path d="M0 81L40 77.500Q66 76 66.700 84Q64 92 45 94L0 100z" fill="#e7c4b2"/><path d="M0 99L38 95.500Q53 96 53 103Q50 111 36 113L0 119z" fill="#e2bca9"/><path d="M0 98L40 94M0 80L36 78" stroke="#c4917f" stroke-width="1.500" opacity="0.800"/><path d="M0 40l6 18 0 60h-6z" fill="#e6c2b1"/><path d="M341 248q10-6 20 0l1 20q-10 6-20 0z" fill="#a7a38c"/><ellipse cx="351" cy="248" rx="10" ry="3.5" fill="#c9c6b0"/><path d="M349 262l12-2v8q-6 4-12 3z" fill="#3daf40"/><path d="M140 325l60-14 60-12 40-8 22-20 8-18 12 0 0 14 16-2 14 8 2 24-14 22-10 8z" fill="#efcbb5"/><path d="M322 262q-2 10 6 16l-6 8-8-6z" fill="#e0b8a2" opacity="0.7"/></g></g><rect x="120" y="273" width="332.5" height="15" fill="#000"/><text x="123.6" y="286" font-size="11" fill="#fff" stroke="#fff" stroke-width="0.25" font-family="Liberation Sans, sans-serif" textLength="326.4" lengthAdjust="spacingAndGlyphs">Then, the lower end of the metre rule is pulled by a horizontal thread.</text></svg>
<span class="t" style="left:982.00px;top:471px;font-size:15px;line-height:17.23px;color:#2d8ceb;letter-spacing:-0.113px;-webkit-text-stroke:0.5px #2d8ceb;">00:00:44:21</span>
<div style="position:absolute;left:1082.5px;top:471.5px;width:66px;height:16.5px;background:#1e1e1e;border:1px solid #3c3c3c;border-radius:3px;box-sizing:border-box;"></div>
<span class="t" style="left:1090.30px;top:474px;font-size:12px;line-height:13.79px;color:#c8c8c8;letter-spacing:-0.067px;transform:scaleX(0.9672);transform-origin:0 0;">Fit</span>
<svg style="position:absolute;left:1135.5px;top:477.75px;" width="8" height="5" viewBox="0 0 8 5"><path d="M0.6 0.6l3.4 3.4 3.4-3.4" fill="none" stroke="#c8c8c8" stroke-width="1.3"/></svg>
<div style="position:absolute;left:1346.5px;top:471.5px;width:66px;height:16.5px;background:#1e1e1e;border:1px solid #3c3c3c;border-radius:3px;box-sizing:border-box;"></div>
<span class="t" style="left:1354.50px;top:474px;font-size:12px;line-height:13.79px;color:#c8c8c8;letter-spacing:-0.073px;transform:scaleX(0.9188);transform-origin:0 0;">Full</span>
<svg style="position:absolute;left:1399.5px;top:477.75px;" width="8" height="5" viewBox="0 0 8 5"><path d="M0.6 0.6l3.4 3.4 3.4-3.4" fill="none" stroke="#c8c8c8" stroke-width="1.3"/></svg>
<svg style="position:absolute;left:1425.5px;top:472.5px;" width="14.0" height="14.0" viewBox="0 0 14 14"><path d="M3.6 0.6a3.6 3.6 0 0 1 4.6 4.3l5 5a1.7 1.7 0 0 1-2.5 2.5l-5-5a3.6 3.6 0 0 1-4.6-4.3l2.3 2.2 2-0.5 0.5-2z" fill="#c2c2c2"/></svg>
<span class="t" style="left:1453.00px;top:471px;font-size:15px;line-height:17.23px;color:#9c9c9c;letter-spacing:0.023px;-webkit-text-stroke:0.4px #9c9c9c;">00:02:38:02</span>
<svg style="position:absolute;left:0px;top:0px;pointer-events:none;" width="1920" height="1040" viewBox="0 0 1920 1040"><path d="M973.20 501.8V512.6M980.35 507.6V512.6M987.49 507.6V512.6M994.64 507.6V512.6M1001.79 507.6V512.6M1008.93 507.6V512.6M1016.08 507.6V512.6M1023.23 507.6V512.6M1030.37 507.6V512.6M1037.52 507.6V512.6M1044.67 507.6V512.6M1051.81 507.6V512.6M1058.96 507.6V512.6M1066.11 507.6V512.6M1073.25 507.6V512.6M1080.40 501.8V512.6M1087.55 507.6V512.6M1094.69 507.6V512.6M1101.84 507.6V512.6M1108.99 507.6V512.6M1116.13 507.6V512.6M1123.28 507.6V512.6M1130.43 507.6V512.6M1137.57 507.6V512.6M1144.72 507.6V512.6M1151.87 507.6V512.6M1159.01 507.6V512.6M1166.16 507.6V512.6M1173.31 507.6V512.6M1180.45 507.6V512.6M1187.60 501.8V512.6M1194.75 507.6V512.6M1201.89 507.6V512.6M1209.04 507.6V512.6M1216.19 507.6V512.6M1223.33 507.6V512.6M1230.48 507.6V512.6M1237.63 507.6V512.6M1244.77 507.6V512.6M1251.92 507.6V512.6M1259.07 507.6V512.6M1266.21 507.6V512.6M1273.36 507.6V512.6M1280.51 507.6V512.6M1287.65 507.6V512.6M1294.80 501.8V512.6M1301.95 507.6V512.6M1309.09 507.6V512.6M1316.24 507.6V512.6M1323.39 507.6V512.6M1330.53 507.6V512.6M1337.68 507.6V512.6M1344.83 507.6V512.6M1351.97 507.6V512.6M1359.12 507.6V512.6M1366.27 507.6V512.6M1373.41 507.6V512.6M1380.56 507.6V512.6M1387.71 507.6V512.6M1394.85 507.6V512.6M1402.00 501.8V512.6M1409.15 507.6V512.6M1416.29 507.6V512.6M1423.44 507.6V512.6M1430.59 507.6V512.6M1437.73 507.6V512.6M1444.88 507.6V512.6M1452.03 507.6V512.6M1459.17 507.6V512.6M1466.32 507.6V512.6M1473.47 507.6V512.6M1480.61 507.6V512.6M1487.76 507.6V512.6M1494.91 507.6V512.6M1502.05 507.6V512.6M1509.20 501.8V512.6M1516.35 507.6V512.6M1523.49 507.6V512.6M1530.64 507.6V512.6M1537.79 507.6V512.6" stroke="#5c5c5c" stroke-width="1" fill="none"/></svg>
<svg style="position:absolute;left:1126.5px;top:500px;" width="12" height="12" viewBox="0 0 12 12"><path d="M0.3 0h11v6.8l-4 4.8h-3l-4-4.8z" fill="#2d8ceb"/><path d="M5.8 7.5v4.5" stroke="#17365a" stroke-width="1"/></svg>
<div style="position:absolute;left:974px;top:513.8px;width:571px;height:11px;background:#2e2e2e;border-radius:5.5px;"></div>
<svg style="position:absolute;left:973.7px;top:513.3px;" width="12" height="12" viewBox="0 0 12 12"><circle cx="6" cy="6" r="3.9" fill="#232323" stroke="#b4b4b4" stroke-width="1.7"/></svg>
<svg style="position:absolute;left:1532px;top:513.3px;" width="12" height="12" viewBox="0 0 12 12"><circle cx="6" cy="6" r="3.9" fill="#232323" stroke="#b4b4b4" stroke-width="1.7"/></svg>
<svg style="position:absolute;left:1069.6px;top:537.8px;" width="12" height="12" viewBox="0 0 12 12"><path d="M1.5 0.8h9v6.2l-4.5 4.2-4.5-4.2z" fill="#c2c2c2"/></svg>
<svg style="position:absolute;left:1108.5px;top:536.8px;" width="8" height="14" viewBox="0 0 8 14"><path d="M5.600 0.800q-2 0-2 1.800v2.600q0 1.800-1.600 1.800q1.600 0 1.600 1.800v2.600q0 1.800 2 1.800" fill="none" stroke="#c2c2c2" stroke-width="1.500"/></svg>
<svg style="position:absolute;left:1140.4px;top:536.8px;" width="8" height="14" viewBox="0 0 8 14"><path d="M2.400 0.800q2 0 2 1.800v2.600q0 1.800 1.600 1.800q-1.600 0-1.600 1.800v2.600q0 1.800-2 1.800" fill="none" stroke="#c2c2c2" stroke-width="1.500"/></svg>
<svg style="position:absolute;left:1180.7px;top:536.8px;" width="18" height="14" viewBox="0 0 18 14"><path d="M4.800 0.800q-2 0-2 1.800v2.600q0 1.800-1.600 1.800q1.600 0 1.600 1.800v2.600q0 1.800 2 1.800" fill="none" stroke="#c2c2c2" stroke-width="1.5"/><path d="M6.2 7l5-4.2v2.9h5.3v2.6h-5.3v2.9z" fill="#c2c2c2"/></svg>
<svg style="position:absolute;left:1217px;top:537.8px;" width="14" height="12" viewBox="0 0 14 12"><path d="M0.5 6l8.5-5v10z" fill="#c2c2c2"/><rect x="10.6" y="1" width="2.2" height="10" fill="#c2c2c2"/></svg>
<svg style="position:absolute;left:1251.4px;top:536.8px;" width="14" height="14" viewBox="0 0 14 14"><path d="M1 0.8l12.4 6.2-12.4 6.2z" fill="#c2c2c2"/></svg>
<svg style="position:absolute;left:1287.4px;top:537.8px;" width="14" height="12" viewBox="0 0 14 12"><path d="M13.5 6l-8.5-5v10z" fill="#c2c2c2"/><rect x="1.2" y="1" width="2.2" height="10" fill="#c2c2c2"/></svg>
<svg style="position:absolute;left:1319px;top:536.8px;" width="18" height="14" viewBox="0 0 18 14"><path d="M13.200 0.800q2 0 2 1.800v2.600q0 1.800 1.600 1.800q-1.600 0-1.600 1.800v2.600q0 1.800-2 1.800" fill="none" stroke="#c2c2c2" stroke-width="1.5"/><path d="M11.8 7l-5-4.2v2.9h-5.3v2.6h5.3v2.9z" fill="#c2c2c2"/></svg>
<svg style="position:absolute;left:1361px;top:536.8px;" width="20" height="14" viewBox="0 0 20 14"><path d="M5.5 0.8h8.5v6h-8.5z" fill="#c2c2c2"/><path d="M0.5 7.4h8v5.2h-8zM11 7.4h8.3v5.2h-8.3z" fill="#c2c2c2"/><path d="M7.4 5.2h4.8l-2.4-3.4z" fill="#232323"/></svg>
<svg style="position:absolute;left:1396px;top:536.8px;" width="20" height="14" viewBox="0 0 20 14"><path d="M5.5 0.8h8.5v6h-8.5z" fill="#c2c2c2"/><path d="M0.5 7.4h8v5.2h-8zM11 7.4h8.3v5.2h-8.3z" fill="#c2c2c2"/><path d="M7.4 5.2h4.8l-2.4-3.4z" fill="#232323"/><path d="M1.6 8.4v3.2l2.6-1.6zM18.2 8.4v3.2l-2.6-1.6z" fill="#232323"/></svg>
<svg style="position:absolute;left:1434px;top:537.8px;" width="16" height="12" viewBox="0 0 16 12"><path d="M0.5 2.6h3.6l1.2-2h5.4l1.2 2h3.6v8.9h-15z" fill="#c2c2c2"/><circle cx="8" cy="6.6" r="3" fill="#232323"/><circle cx="8" cy="6.6" r="1.7" fill="#c2c2c2"/></svg>
<svg style="position:absolute;left:1519.6px;top:539.3px;" width="12" height="12" viewBox="0 0 12 12"><path d="M6 0.5v11M0.5 6h11" stroke="#d0d0d0" stroke-width="2.6"/></svg>
<span class="t" style="left:1574.20px;top:101px;font-size:12px;line-height:13.79px;color:#dadada;letter-spacing:-0.087px;transform:scaleX(0.9025);transform-origin:0 0;">Essential Sound</span>
<div style="position:absolute;left:1662px;top:103.8px;width:8px;height:1.2px;background:#c8c8c8;"></div>
<div style="position:absolute;left:1662px;top:106.8px;width:8px;height:1.2px;background:#c8c8c8;"></div>
<div style="position:absolute;left:1662px;top:109.8px;width:8px;height:1.2px;background:#c8c8c8;"></div>
<div style="position:absolute;left:1562px;top:127px;width:1357px;height:1.6px;background:#2f2f2f;width:357px;"></div>
<div style="position:absolute;left:1562px;top:158px;width:1357px;height:1.6px;background:#2f2f2f;width:357px;"></div>
<div style="position:absolute;left:1562px;top:193.8px;width:1357px;height:1.6px;background:#2f2f2f;width:357px;"></div>
<div style="position:absolute;left:1562px;top:224.3px;width:1357px;height:1.6px;background:#2f2f2f;width:357px;"></div>
<span class="t" style="left:1573.30px;top:139px;font-size:12px;line-height:13.79px;color:#b4b4b4;letter-spacing:-0.085px;font-style:italic;transform:scaleX(0.8609);transform-origin:0 0;">No Selection</span>
<span class="t" style="left:1573.50px;top:169px;font-size:12px;line-height:13.79px;color:#505050;letter-spacing:-0.081px;transform:scaleX(0.8946);transform-origin:0 0;">Preset:</span>
<div style="position:absolute;left:1615px;top:165px;width:293px;height:20px;background:#2a2a2a;border-radius:2px;"></div>
<svg style="position:absolute;left:1894.5px;top:173px;" width="8" height="5" viewBox="0 0 8 5"><path d="M0.6 0.6l3.4 3.4 3.4-3.4" fill="none" stroke="#4a4a4a" stroke-width="1.3"/></svg>
<span class="t" style="left:1584.00px;top:249px;font-size:12px;line-height:13.79px;color:#b4b4b4;letter-spacing:-0.078px;transform:scaleX(0.9276);transform-origin:0 0;">Select clips of Audio Type:</span>
<div style="position:absolute;left:1582.3px;top:274.3px;width:315.5px;height:29px;background:#1b1b1b;border:1px solid #3e3e3e;border-radius:3px;box-sizing:border-box;"></div>
<span class="t" style="left:1746.30px;top:283px;font-size:12px;line-height:13.79px;color:#c8c8c8;letter-spacing:-0.089px;transform:scaleX(0.9302);transform-origin:0 0;">Dialogue</span>
<svg style="position:absolute;left:1883.5px;top:282.8px;" width="6" height="12" viewBox="0 0 6 12"><path d="M1 0.800l3 5.200-3 5.200" fill="none" stroke="#bdbdbd" stroke-width="1.1"/></svg>
<svg style="position:absolute;left:1723px;top:281.3px;" width="17" height="16" viewBox="0 0 17 16"><path d="M2.5 1h11.5a1.8 1.8 0 0 1 1.8 1.8v6.4a1.8 1.8 0 0 1-1.8 1.8h-6.5l-3.3 3.6v-3.6h-1.7a1.8 1.8 0 0 1-1.8-1.8v-6.4a1.8 1.8 0 0 1 1.8-1.8z" fill="#c8c8c8"/></svg>
<div style="position:absolute;left:1582.3px;top:314.3px;width:315.5px;height:29px;background:#242424;border:1px solid #323232;border-radius:3px;box-sizing:border-box;"></div>
<span class="t" style="left:1746.30px;top:323px;font-size:12px;line-height:13.79px;color:#555555;letter-spacing:-0.094px;transform:scaleX(0.9233);transform-origin:0 0;">Music</span>
<svg style="position:absolute;left:1883.5px;top:322.8px;" width="6" height="12" viewBox="0 0 6 12"><path d="M1 0.800l3 5.200-3 5.200" fill="none" stroke="#6a6a6a" stroke-width="1.1"/></svg>
<svg style="position:absolute;left:1723px;top:321.3px;" width="17" height="16" viewBox="0 0 17 16"><path d="M6.5 2.2l8-1.5v9.8a2.4 2 0 1 1-1.3-1.8v-5.6l-5.4 1v7.6a2.4 2 0 1 1-1.3-1.8z" fill="#555555"/></svg>
<div style="position:absolute;left:1582.3px;top:354.3px;width:315.5px;height:29px;background:#242424;border:1px solid #323232;border-radius:3px;box-sizing:border-box;"></div>
<span class="t" style="left:1746.30px;top:363px;font-size:12px;line-height:13.79px;color:#555555;letter-spacing:-0.117px;transform:scaleX(0.7960);transform-origin:0 0;">SFX</span>
<svg style="position:absolute;left:1883.5px;top:362.8px;" width="6" height="12" viewBox="0 0 6 12"><path d="M1 0.800l3 5.200-3 5.200" fill="none" stroke="#6a6a6a" stroke-width="1.1"/></svg>
<svg style="position:absolute;left:1723px;top:361.3px;" width="17" height="16" viewBox="0 0 17 16"><path d="M8.5 0.5l1.4 4.4 3.6-3-1.7 4.3 4.6-0.5-3.8 2.6 3.8 2.4-4.6-0.3 1.7 4.3-3.6-3-1.4 4.4-1.4-4.4-3.6 3 1.7-4.3-4.6 0.3 3.8-2.4-3.8-2.6 4.6 0.5-1.7-4.3 3.6 3z" fill="#555555"/></svg>
<div style="position:absolute;left:1582.3px;top:394.3px;width:315.5px;height:29px;background:#242424;border:1px solid #323232;border-radius:3px;box-sizing:border-box;"></div>
<span class="t" style="left:1746.30px;top:403px;font-size:12px;line-height:13.79px;color:#555555;letter-spacing:-0.100px;transform:scaleX(0.9170);transform-origin:0 0;">Ambience</span>
<svg style="position:absolute;left:1883.5px;top:402.8px;" width="6" height="12" viewBox="0 0 6 12"><path d="M1 0.800l3 5.200-3 5.200" fill="none" stroke="#6a6a6a" stroke-width="1.1"/></svg>
<svg style="position:absolute;left:1723px;top:401.3px;" width="17" height="16" viewBox="0 0 17 16"><path d="M6 14.5q-2.5-6 1.5-9.5t8-3q0.8 5-2.3 8.6t-6 2.2l6-8.3-6.8 7.500z" fill="#555555"/><path d="M2.5 5.500q1-3 4-4M5 7q0.6-1.8 2.4-2.6" stroke="#555555" stroke-width="1.1" fill="none"/></svg>
<div style="position:absolute;left:380.8px;top:584.3px;width:27.5px;height:25px;background:#161616;border:1px solid #383838;border-radius:3px;box-sizing:border-box;"></div>
<svg style="position:absolute;left:376px;top:580px;" width="160" height="60" viewBox="0 0 1920 720"><path d="M170 105L315 243L225 250L170 315Z" fill="#2d8ceb"/><rect x="473" y="138" width="110" height="120" fill="none" stroke="#c6c6c6" stroke-width="16" stroke-dasharray="34 16" stroke-dashoffset="17"/><path d="M540 168h78v-34l70 64-70 64v-34h-78z" fill="#232323"/><path d="M548 180h62v-32l72 50-72 50v-32h-62z" fill="#c6c6c6"/><rect x="910" y="118" width="30" height="172" fill="#c6c6c6"/><path d="M805 198l82-50v100zM1045 198l-82-50v100z" fill="#c6c6c6"/><path d="M1245 120L1365 235L1300 300L1180 185Z" fill="#c6c6c6"/><path d="M1238 188l70 66" stroke="#232323" stroke-width="16" stroke-dasharray="22 8"/><rect x="1497" y="118" width="28" height="172" fill="#c6c6c6"/><rect x="1715" y="118" width="28" height="172" fill="#c6c6c6"/><path d="M1535 200l46-40v28h72v-28l46 40-46 40v-28h-72v28z" fill="#c6c6c6"/><path d="M270 435l55 55-40 40-55-55z" fill="#c6c6c6"/><path d="M222 484L280 542L255 600L150 628L132 622L160 520Z" fill="#c6c6c6"/><path d="M143 617L208 552" stroke="#232323" stroke-width="9"/><circle cx="212" cy="548" r="13" fill="#232323"/><path d="M548 560L540 470a12 12 0 0 1 24-3L570 535L574 448a12 12 0 0 1 24 0L600 535L610 458a12 12 0 0 1 24 3L626 545L645 492a11 11 0 0 1 21 7L648 580Q630 625 585 625Q545 625 525 590L483 540q-6-14 8-16t22 8L548 560Z" fill="#c6c6c6"/><path d="M721 300v36h-36z" fill="#c6c6c6"/><path d="M1069 300v36h-36z" fill="#c6c6c6"/><path d="M1766 300v36h-36z" fill="#c6c6c6"/><path d="M374 622v36h-36z" fill="#c6c6c6"/><path d="M721 622v36h-36z" fill="#c6c6c6"/><path d="M1069 622v36h-36z" fill="#c6c6c6"/></svg>
<span class="t" style="left:445.30px;top:612px;font-size:21.5px;line-height:24.70px;color:#c6c6c6;font-family:'Liberation Serif',serif;font-weight:bold;">T</span>
<div style="position:absolute;left:556px;top:568px;width:881px;height:450px;background:transparent;border:1px solid #2d8ceb;box-sizing:border-box;"></div>
<div style="position:absolute;left:557px;top:641px;width:879px;height:376px;background:#212121;"></div>
<span class="t" style="left:584.00px;top:576px;font-size:12px;line-height:13.79px;color:#a7a7a7;letter-spacing:-0.089px;transform:scaleX(0.9199);transform-origin:0 0;">Japanese Culture Programme (Science)</span>
<svg style="position:absolute;left:818px;top:580px;" width="6" height="6" viewBox="0 0 6 6"><path d="M0.5 0.500l4.8 4.800M5.3 0.500l-4.8 4.8" stroke="#9a9a9a" stroke-width="1"/></svg>
<span class="t" style="left:835.40px;top:576px;font-size:12px;line-height:13.79px;color:#dcdcdc;letter-spacing:-0.089px;transform:scaleX(0.9166);transform-origin:0 0;">Japanese Culture Programme (Science)</span>
<div style="position:absolute;left:1039.5px;top:579px;width:8px;height:1.2px;background:#c8c8c8;"></div>
<div style="position:absolute;left:1039.5px;top:582px;width:8px;height:1.2px;background:#c8c8c8;"></div>
<div style="position:absolute;left:1039.5px;top:585px;width:8px;height:1.2px;background:#c8c8c8;"></div>
<div style="position:absolute;left:818px;top:592.2px;width:229.5px;height:2px;background:#d2d2d2;"></div>
<span class="t" style="left:576.00px;top:600px;font-size:15.5px;line-height:17.81px;color:#2d8ceb;letter-spacing:0.647px;-webkit-text-stroke:0.55px #2d8ceb;">00:00:44:21</span>
<svg style="position:absolute;left:570px;top:618px;" width="170" height="26" viewBox="0 0 1920 294"><path d="M178 85V212" stroke="#2d8ceb" stroke-width="11"/><rect x="160" y="68" width="36" height="32" fill="#2d8ceb"/><path d="M195 125h42M90 158h75M195 158h22M125 191h36M205 191h42" stroke="#2d8ceb" stroke-width="20"/><path d="M105 95L238 212" stroke="#2d8ceb" stroke-width="9"/><path d="M503 176V150a50 50 0 0 1 100 0V176" fill="none" stroke="#2d8ceb" stroke-width="33"/><path d="M503 176V212M603 176V212" stroke="#1d62ad" stroke-width="33"/><rect x="858" y="85" width="43" height="43" fill="#2d8ceb"/><path d="M901 156h-37v40h37" fill="none" stroke="#2d8ceb" stroke-width="12"/><path d="M915 85L1015 185L962 180L915 228Z" fill="#2d8ceb"/><path d="M938 82H1018V132H990Z" fill="#2d8ceb"/><path d="M1285 98H1368V165L1327 205L1285 165Z" fill="#bdbdbd"/></svg>
<svg style="position:absolute;left:713px;top:623.5px;" width="14.700000000000001" height="14.700000000000001" viewBox="0 0 14 14"><path d="M3.6 0.6a3.6 3.6 0 0 1 4.6 4.3l5 5a1.7 1.7 0 0 1-2.5 2.5l-5-5a3.6 3.6 0 0 1-4.6-4.3l2.3 2.2 2-0.5 0.5-2z" fill="#bdbdbd"/></svg>
<div style="position:absolute;left:793px;top:600px;width:620px;height:42px;overflow:hidden;">
<svg style="position:absolute;left:0px;top:0px;" width="620" height="42" viewBox="0 0 620 42"><path d="M4.71 33.4V38.6M12.30 27.6V38.6M19.89 33.4V38.6M27.48 33.4V38.6M35.07 33.4V38.6M42.66 33.4V38.6M50.25 33.4V38.6M57.84 33.4V38.6M65.43 33.4V38.6M73.02 33.4V38.6M80.61 33.4V38.6M88.20 27.6V38.6M95.79 33.4V38.6M103.38 33.4V38.6M110.97 33.4V38.6M118.56 33.4V38.6M126.15 33.4V38.6M133.74 33.4V38.6M141.33 33.4V38.6M148.92 33.4V38.6M156.51 33.4V38.6M164.10 27.6V38.6M171.69 33.4V38.6M179.28 33.4V38.6M186.87 33.4V38.6M194.46 33.4V38.6M202.05 33.4V38.6M209.64 33.4V38.6M217.23 33.4V38.6M224.82 33.4V38.6M232.41 33.4V38.6M240.00 27.6V38.6M247.59 33.4V38.6M255.18 33.4V38.6M262.77 33.4V38.6M270.36 33.4V38.6M277.95 33.4V38.6M285.54 33.4V38.6M293.13 33.4V38.6M300.72 33.4V38.6M308.31 33.4V38.6M315.90 27.6V38.6M323.49 33.4V38.6M331.08 33.4V38.6M338.67 33.4V38.6M346.26 33.4V38.6M353.85 33.4V38.6M361.44 33.4V38.6M369.03 33.4V38.6M376.62 33.4V38.6M384.21 33.4V38.6M391.80 27.6V38.6M399.39 33.4V38.6M406.98 33.4V38.6M414.57 33.4V38.6M422.16 33.4V38.6M429.75 33.4V38.6M437.34 33.4V38.6M444.93 33.4V38.6M452.52 33.4V38.6M460.11 33.4V38.6M467.70 27.6V38.6M475.29 33.4V38.6M482.88 33.4V38.6M490.47 33.4V38.6M498.06 33.4V38.6M505.65 33.4V38.6M513.24 33.4V38.6M520.83 33.4V38.6M528.42 33.4V38.6M536.01 33.4V38.6M543.60 27.6V38.6M551.19 33.4V38.6M558.78 33.4V38.6M566.37 33.4V38.6M573.96 33.4V38.6M581.55 33.4V38.6M589.14 33.4V38.6M596.73 33.4V38.6M604.32 33.4V38.6M611.91 33.4V38.6M619.50 27.6V38.6" stroke="#5a5a5a" stroke-width="1" fill="none"/></svg>
<span class="t" style="left:-15.20px;top:13px;font-size:11px;line-height:12.64px;color:#b4b4b4;letter-spacing:-0.056px;">00:00:25:00</span>
<span class="t" style="left:60.70px;top:13px;font-size:11px;line-height:12.64px;color:#b4b4b4;letter-spacing:-0.056px;">00:00:30:00</span>
<span class="t" style="left:136.60px;top:13px;font-size:11px;line-height:12.64px;color:#b4b4b4;letter-spacing:-0.056px;">00:00:35:00</span>
<span class="t" style="left:212.50px;top:13px;font-size:11px;line-height:12.64px;color:#b4b4b4;letter-spacing:-0.056px;">00:00:40:00</span>
<span class="t" style="left:288.40px;top:13px;font-size:11px;line-height:12.64px;color:#b4b4b4;letter-spacing:-0.056px;">00:00:45:00</span>
<span class="t" style="left:364.30px;top:13px;font-size:11px;line-height:12.64px;color:#b4b4b4;letter-spacing:-0.056px;">00:00:50:00</span>
<span class="t" style="left:440.20px;top:13px;font-size:11px;line-height:12.64px;color:#b4b4b4;letter-spacing:-0.056px;">00:00:55:00</span>
<span class="t" style="left:516.10px;top:13px;font-size:11px;line-height:12.64px;color:#b4b4b4;letter-spacing:-0.056px;">00:01:00:00</span>
<span class="t" style="left:592.00px;top:13px;font-size:11px;line-height:12.64px;color:#b4b4b4;letter-spacing:-0.056px;">00:01:05:00</span>
<div style="position:absolute;left:0px;top:39px;width:620px;height:2px;background:#f0e614;"></div>
</div>
<div style="position:absolute;left:557px;top:739px;width:856px;height:1px;background:#2e2e2e;"></div>
<div style="position:absolute;left:557px;top:764px;width:856px;height:1px;background:#2e2e2e;"></div>
<div style="position:absolute;left:557px;top:789px;width:856px;height:1px;background:#2e2e2e;"></div>
<div style="position:absolute;left:557px;top:814px;width:856px;height:1px;background:#2e2e2e;"></div>
<div style="position:absolute;left:557px;top:818px;width:856px;height:1px;background:#2e2e2e;"></div>
<div style="position:absolute;left:557px;top:843px;width:856px;height:1px;background:#2e2e2e;"></div>
<div style="position:absolute;left:557px;top:868px;width:856px;height:1px;background:#2e2e2e;"></div>
<div style="position:absolute;left:557px;top:893px;width:856px;height:1px;background:#2e2e2e;"></div>
<div style="position:absolute;left:557px;top:918px;width:856px;height:1px;background:#2e2e2e;"></div>
<div style="position:absolute;left:557px;top:815px;width:856px;height:3px;background:#242424;"></div>
<div style="position:absolute;left:792px;top:641px;width:1px;height:353px;background:#2c2c2c;"></div>
<div style="position:absolute;left:653px;top:740px;width:54px;height:24px;background:#282828;"></div>
<div style="position:absolute;left:653px;top:819px;width:27px;height:24px;background:#282828;"></div>
<div style="position:absolute;left:653px;top:765px;width:54px;height:24px;background:#282828;"></div>
<div style="position:absolute;left:653px;top:844px;width:27px;height:24px;background:#282828;"></div>
<div style="position:absolute;left:653px;top:790px;width:54px;height:24px;background:#282828;"></div>
<div style="position:absolute;left:653px;top:869px;width:27px;height:24px;background:#282828;"></div>
<span class="t" style="left:630.80px;top:748px;font-size:9.5px;line-height:10.92px;color:#b0b0b0;">V</span>
<span class="t" style="left:636.70px;top:749px;font-size:8px;line-height:9.19px;color:#b0b0b0;">3</span>
<div style="position:absolute;left:651.2px;top:755px;width:1px;height:1px;background:#8a8a8a;"></div>
<svg style="position:absolute;left:606px;top:744.5px;" width="10" height="12" viewBox="0 0 10 12"><rect x="0.8" y="5.2" width="8" height="6" rx="0.6" fill="#c6c6c6"/><path d="M2.6 5.200v-1.800a2.2 2.2 0 0 1 4.4 0v0.4" fill="none" stroke="#c6c6c6" stroke-width="1.5"/><rect x="4.1" y="7" width="1.4" height="2.4" fill="#232323"/></svg>
<svg style="position:absolute;left:660px;top:747px;" width="14" height="10" viewBox="0 0 14 10"><rect x="0.7" y="0.7" width="8.6" height="3" fill="none" stroke="#c6c6c6" stroke-width="1.3"/><rect x="0.7" y="5.4" width="8.6" height="3" fill="none" stroke="#c6c6c6" stroke-width="1.3"/><path d="M9.5 2.2h2.800v4.800h-2.800" fill="none" stroke="#c6c6c6" stroke-width="1.300"/></svg>
<svg style="position:absolute;left:686px;top:747.5px;" width="15" height="10" viewBox="0 0 15 10"><path d="M0.5 5q7-8.5 14 0q-7 8.5-14 0z" fill="#c6c6c6"/><circle cx="7.5" cy="5" r="2.7" fill="#232323"/><circle cx="7.5" cy="5" r="1.3" fill="#c6c6c6"/></svg>
<span class="t" style="left:630.80px;top:773px;font-size:9.5px;line-height:10.92px;color:#b0b0b0;">V</span>
<span class="t" style="left:636.70px;top:774px;font-size:8px;line-height:9.19px;color:#b0b0b0;">2</span>
<div style="position:absolute;left:651.2px;top:780px;width:1px;height:1px;background:#8a8a8a;"></div>
<svg style="position:absolute;left:606px;top:769.5px;" width="10" height="12" viewBox="0 0 10 12"><rect x="0.8" y="5.2" width="8" height="6" rx="0.6" fill="#c6c6c6"/><path d="M2.6 5.200v-1.800a2.2 2.2 0 0 1 4.4 0v0.4" fill="none" stroke="#c6c6c6" stroke-width="1.5"/><rect x="4.1" y="7" width="1.4" height="2.4" fill="#232323"/></svg>
<svg style="position:absolute;left:660px;top:772px;" width="14" height="10" viewBox="0 0 14 10"><rect x="0.7" y="0.7" width="8.6" height="3" fill="none" stroke="#c6c6c6" stroke-width="1.3"/><rect x="0.7" y="5.4" width="8.6" height="3" fill="none" stroke="#c6c6c6" stroke-width="1.3"/><path d="M9.5 2.2h2.800v4.800h-2.800" fill="none" stroke="#c6c6c6" stroke-width="1.300"/></svg>
<svg style="position:absolute;left:686px;top:772.5px;" width="15" height="10" viewBox="0 0 15 10"><path d="M0.5 5q7-8.5 14 0q-7 8.5-14 0z" fill="#c6c6c6"/><circle cx="7.5" cy="5" r="2.7" fill="#232323"/><circle cx="7.5" cy="5" r="1.3" fill="#c6c6c6"/></svg>
<div style="position:absolute;left:569px;top:790px;width:32px;height:24px;background:#0a5a8c;"></div>
<span class="t" style="left:578.60px;top:798px;font-size:9.5px;line-height:10.92px;color:#a9cbe6;">V</span>
<span class="t" style="left:584.50px;top:799px;font-size:8px;line-height:9.19px;color:#a9cbe6;">1</span>
<div style="position:absolute;left:598.2px;top:805px;width:1px;height:1px;background:#8fb6d6;"></div>
<div style="position:absolute;left:621px;top:790px;width:32px;height:24px;background:#0a5a8c;"></div>
<span class="t" style="left:630.80px;top:798px;font-size:9.5px;line-height:10.92px;color:#a9cbe6;">V</span>
<span class="t" style="left:636.70px;top:799px;font-size:8px;line-height:9.19px;color:#a9cbe6;">1</span>
<div style="position:absolute;left:651.2px;top:805px;width:1px;height:1px;background:#8a8a8a;"></div>
<svg style="position:absolute;left:606px;top:794.5px;" width="10" height="12" viewBox="0 0 10 12"><rect x="0.8" y="5.2" width="8" height="6" rx="0.6" fill="#c6c6c6"/><path d="M2.6 5.200v-1.800a2.2 2.2 0 0 1 4.4 0v0.4" fill="none" stroke="#c6c6c6" stroke-width="1.5"/><rect x="4.1" y="7" width="1.4" height="2.4" fill="#232323"/></svg>
<svg style="position:absolute;left:660px;top:797px;" width="14" height="10" viewBox="0 0 14 10"><rect x="0.7" y="0.7" width="8.6" height="3" fill="none" stroke="#c6c6c6" stroke-width="1.3"/><rect x="0.7" y="5.4" width="8.6" height="3" fill="none" stroke="#c6c6c6" stroke-width="1.3"/><path d="M9.5 2.2h2.800v4.800h-2.800" fill="none" stroke="#c6c6c6" stroke-width="1.300"/></svg>
<svg style="position:absolute;left:686px;top:797.5px;" width="15" height="10" viewBox="0 0 15 10"><path d="M0.5 5q7-8.5 14 0q-7 8.5-14 0z" fill="#c6c6c6"/><circle cx="7.5" cy="5" r="2.7" fill="#232323"/><circle cx="7.5" cy="5" r="1.3" fill="#c6c6c6"/></svg>
<div style="position:absolute;left:569px;top:819px;width:32px;height:24px;background:#0a5a8c;"></div>
<span class="t" style="left:578.60px;top:827px;font-size:9.5px;line-height:10.92px;color:#a9cbe6;">A</span>
<span class="t" style="left:584.50px;top:828px;font-size:8px;line-height:9.19px;color:#a9cbe6;">1</span>
<div style="position:absolute;left:598.2px;top:834px;width:1px;height:1px;background:#8fb6d6;"></div>
<div style="position:absolute;left:621px;top:819px;width:32px;height:24px;background:#0a5a8c;"></div>
<span class="t" style="left:630.80px;top:827px;font-size:9.5px;line-height:10.92px;color:#a9cbe6;">A</span>
<span class="t" style="left:636.70px;top:828px;font-size:8px;line-height:9.19px;color:#a9cbe6;">1</span>
<div style="position:absolute;left:651.2px;top:834px;width:1px;height:1px;background:#8fb6d6;"></div>
<svg style="position:absolute;left:606px;top:823.5px;" width="10" height="12" viewBox="0 0 10 12"><rect x="0.8" y="5.2" width="8" height="6" rx="0.6" fill="#c6c6c6"/><path d="M2.6 5.200v-1.800a2.2 2.2 0 0 1 4.4 0v0.4" fill="none" stroke="#c6c6c6" stroke-width="1.5"/><rect x="4.1" y="7" width="1.4" height="2.4" fill="#232323"/></svg>
<svg style="position:absolute;left:660px;top:826px;" width="14" height="10" viewBox="0 0 14 10"><rect x="0.7" y="0.7" width="8.6" height="3" fill="none" stroke="#c6c6c6" stroke-width="1.3"/><rect x="0.7" y="5.4" width="8.6" height="3" fill="none" stroke="#c6c6c6" stroke-width="1.3"/><path d="M9.5 2.2h2.800v4.800h-2.800" fill="none" stroke="#c6c6c6" stroke-width="1.300"/></svg>
<span class="t" style="left:689.30px;top:827px;font-size:9.5px;line-height:10.92px;color:#c6c6c6;">M</span>
<span class="t" style="left:716.90px;top:827px;font-size:9.5px;line-height:10.92px;color:#c6c6c6;">S</span>
<svg style="position:absolute;left:742px;top:823.5px;" width="11" height="15" viewBox="0 0 11 15"><rect x="3" y="0.5" width="5" height="9" rx="2.5" fill="#c6c6c6"/><path d="M1 6.500a4.5 4.5 0 0 0 9 0M5.5 11v2.500M3 14h5" fill="none" stroke="#c6c6c6" stroke-width="1.2"/></svg>
<div style="position:absolute;left:621px;top:844px;width:32px;height:24px;background:#0a5a8c;"></div>
<span class="t" style="left:630.80px;top:852px;font-size:9.5px;line-height:10.92px;color:#a9cbe6;">A</span>
<span class="t" style="left:636.70px;top:853px;font-size:8px;line-height:9.19px;color:#a9cbe6;">2</span>
<div style="position:absolute;left:651.2px;top:859px;width:1px;height:1px;background:#8fb6d6;"></div>
<svg style="position:absolute;left:606px;top:848.5px;" width="10" height="12" viewBox="0 0 10 12"><rect x="0.8" y="5.2" width="8" height="6" rx="0.6" fill="#c6c6c6"/><path d="M2.6 5.200v-1.800a2.2 2.2 0 0 1 4.4 0v0.4" fill="none" stroke="#c6c6c6" stroke-width="1.5"/><rect x="4.1" y="7" width="1.4" height="2.4" fill="#232323"/></svg>
<svg style="position:absolute;left:660px;top:851px;" width="14" height="10" viewBox="0 0 14 10"><rect x="0.7" y="0.7" width="8.6" height="3" fill="none" stroke="#c6c6c6" stroke-width="1.3"/><rect x="0.7" y="5.4" width="8.6" height="3" fill="none" stroke="#c6c6c6" stroke-width="1.3"/><path d="M9.5 2.2h2.800v4.800h-2.800" fill="none" stroke="#c6c6c6" stroke-width="1.300"/></svg>
<span class="t" style="left:689.30px;top:852px;font-size:9.5px;line-height:10.92px;color:#c6c6c6;">M</span>
<span class="t" style="left:716.90px;top:852px;font-size:9.5px;line-height:10.92px;color:#c6c6c6;">S</span>
<svg style="position:absolute;left:742px;top:848.5px;" width="11" height="15" viewBox="0 0 11 15"><rect x="3" y="0.5" width="5" height="9" rx="2.5" fill="#c6c6c6"/><path d="M1 6.500a4.5 4.5 0 0 0 9 0M5.5 11v2.500M3 14h5" fill="none" stroke="#c6c6c6" stroke-width="1.2"/></svg>
<div style="position:absolute;left:621px;top:869px;width:32px;height:24px;background:#0a5a8c;"></div>
<span class="t" style="left:630.80px;top:877px;font-size:9.5px;line-height:10.92px;color:#a9cbe6;">A</span>
<span class="t" style="left:636.70px;top:878px;font-size:8px;line-height:9.19px;color:#a9cbe6;">3</span>
<div style="position:absolute;left:651.2px;top:884px;width:1px;height:1px;background:#8fb6d6;"></div>
<svg style="position:absolute;left:606px;top:873.5px;" width="10" height="12" viewBox="0 0 10 12"><rect x="0.8" y="5.2" width="8" height="6" rx="0.6" fill="#c6c6c6"/><path d="M2.6 5.200v-1.800a2.2 2.2 0 0 1 4.4 0v0.4" fill="none" stroke="#c6c6c6" stroke-width="1.5"/><rect x="4.1" y="7" width="1.4" height="2.4" fill="#232323"/></svg>
<svg style="position:absolute;left:660px;top:876px;" width="14" height="10" viewBox="0 0 14 10"><rect x="0.7" y="0.7" width="8.6" height="3" fill="none" stroke="#c6c6c6" stroke-width="1.3"/><rect x="0.7" y="5.4" width="8.6" height="3" fill="none" stroke="#c6c6c6" stroke-width="1.3"/><path d="M9.5 2.2h2.800v4.800h-2.800" fill="none" stroke="#c6c6c6" stroke-width="1.300"/></svg>
<span class="t" style="left:689.30px;top:877px;font-size:9.5px;line-height:10.92px;color:#c6c6c6;">M</span>
<span class="t" style="left:716.90px;top:877px;font-size:9.5px;line-height:10.92px;color:#c6c6c6;">S</span>
<svg style="position:absolute;left:742px;top:873.5px;" width="11" height="15" viewBox="0 0 11 15"><rect x="3" y="0.5" width="5" height="9" rx="2.5" fill="#c6c6c6"/><path d="M1 6.500a4.5 4.5 0 0 0 9 0M5.5 11v2.500M3 14h5" fill="none" stroke="#c6c6c6" stroke-width="1.2"/></svg>
<svg style="position:absolute;left:606px;top:898.5px;" width="10" height="12" viewBox="0 0 10 12"><rect x="0.8" y="5.2" width="8" height="6" rx="0.6" fill="#c6c6c6"/><path d="M2.6 5.200v-1.800a2.2 2.2 0 0 1 4.4 0v0.4" fill="none" stroke="#c6c6c6" stroke-width="1.5"/><rect x="4.1" y="7" width="1.4" height="2.4" fill="#232323"/></svg>
<span class="t" style="left:624.00px;top:900px;font-size:12px;line-height:13.79px;color:#a7a7a7;letter-spacing:-0.092px;transform:scaleX(0.9827);transform-origin:0 0;">Master</span>
<span class="t" style="left:700.50px;top:900px;font-size:11.5px;line-height:13.21px;color:#2d8ceb;letter-spacing:-0.080px;transform:scaleX(0.9208);transform-origin:0 0;">0.0</span>
<svg style="position:absolute;left:772px;top:896px;" width="12" height="12" viewBox="0 0 12 12"><path d="M0.5 1l5 5-5 5zM11.5 1l-5 5 5 5z" fill="#c6c6c6"/></svg>
<div style="position:absolute;left:793px;top:740px;width:118px;height:24px;background:#749cd2;"></div>
<span class="t" style="left:793.30px;top:741px;font-size:10px;line-height:11.49px;color:#15253d;letter-spacing:-0.074px;transform:scaleX(0.9070);transform-origin:0 0;">rogramme (Science).mp4 [V]</span>
<div style="position:absolute;left:912px;top:765px;width:501px;height:25px;overflow:hidden;">
<div style="position:absolute;left:4.5px;top:0px;width:500px;height:25px;background:#a98fe2;"></div>
<div style="position:absolute;left:8.5px;top:12px;width:118.5px;height:13px;background:#000;"></div>
<div style="position:absolute;left:139px;top:12px;width:52px;height:13px;background:#000;"></div>
<div style="position:absolute;left:206px;top:12px;width:52px;height:13px;background:#000;"></div>
<div style="position:absolute;left:268px;top:12px;width:57px;height:13px;background:#000;"></div>
<div style="position:absolute;left:335px;top:12px;width:35px;height:13px;background:#000;"></div>
<div style="position:absolute;left:380px;top:12px;width:42px;height:13px;background:#000;"></div>
<div style="position:absolute;left:432px;top:12px;width:46px;height:13px;background:#000;"></div>
<div style="position:absolute;left:488px;top:12px;width:36px;height:13px;background:#000;"></div>
<svg style="position:absolute;left:0px;top:0px;" width="501" height="25" viewBox="0 0 501 25"><path d="M4.5 25v-13.500l0.8-6l3.7 7v12.500z" fill="#c4c4c4" stroke="#222" stroke-width="0.7"/><path d="M131.0 25v-13.500l-0.8-6l-3.7 7v12.500z" fill="#c4c4c4" stroke="#222" stroke-width="0.7"/><path d="M135.0 25v-13.500l0.8-6l3.7 7v12.500z" fill="#c4c4c4" stroke="#222" stroke-width="0.7"/><path d="M195.0 25v-13.500l-0.8-6l-3.7 7v12.500z" fill="#c4c4c4" stroke="#222" stroke-width="0.7"/><path d="M202.0 25v-13.500l0.8-6l3.7 7v12.500z" fill="#c4c4c4" stroke="#222" stroke-width="0.7"/><path d="M262.0 25v-13.500l-0.8-6l-3.7 7v12.500z" fill="#c4c4c4" stroke="#222" stroke-width="0.7"/><path d="M264.0 25v-13.500l0.8-6l3.7 7v12.500z" fill="#c4c4c4" stroke="#222" stroke-width="0.7"/><path d="M329.0 25v-13.500l-0.8-6l-3.7 7v12.500z" fill="#c4c4c4" stroke="#222" stroke-width="0.7"/><path d="M331.0 25v-13.500l0.8-6l3.7 7v12.500z" fill="#c4c4c4" stroke="#222" stroke-width="0.7"/><path d="M374.0 25v-13.500l-0.8-6l-3.7 7v12.500z" fill="#c4c4c4" stroke="#222" stroke-width="0.7"/><path d="M376.0 25v-13.500l0.8-6l3.7 7v12.500z" fill="#c4c4c4" stroke="#222" stroke-width="0.7"/><path d="M426.0 25v-13.500l-0.8-6l-3.7 7v12.500z" fill="#c4c4c4" stroke="#222" stroke-width="0.7"/><path d="M428.0 25v-13.500l0.8-6l3.7 7v12.500z" fill="#c4c4c4" stroke="#222" stroke-width="0.7"/><path d="M482.0 25v-13.500l-0.8-6l-3.7 7v12.500z" fill="#c4c4c4" stroke="#222" stroke-width="0.7"/><path d="M484.0 25v-13.500l0.8-6l3.7 7v12.500z" fill="#c4c4c4" stroke="#222" stroke-width="0.7"/><path d="M528.0 25v-13.500l-0.8-6l-3.7 7v12.500z" fill="#c4c4c4" stroke="#222" stroke-width="0.7"/><path d="M4.5 0h5l-5 5z" fill="#e8e8e8"/><path d="M4.5 6l6-6" stroke="#222" stroke-width="0.8"/></svg>
<div style="position:absolute;left:13.5px;top:2.5px;width:11.7px;height:9.5px;background:#8a8a8a;border:1px solid #b9b9b9;box-sizing:border-box;border-bottom:none;"></div>
<span class="t" style="left:15.80px;top:2px;font-size:10px;line-height:11.49px;color:#2a2a2a;font-style:italic;">fx</span>
<span class="t" style="left:32.20px;top:1px;font-size:10px;line-height:11.49px;color:#24163f;letter-spacing:-0.077px;transform:scaleX(0.8948);transform-origin:0 0;">Open Captions</span>
<span class="t" style="left:11.40px;top:13px;font-size:10px;line-height:11.49px;color:#ffffff;letter-spacing:-0.060px;transform:scaleX(0.9179);transform-origin:0 0;">Firstly, we attach a ruler to th</span>
<span class="t" style="left:142.70px;top:13px;font-size:10px;line-height:11.49px;color:#ffffff;letter-spacing:-0.066px;transform:scaleX(0.9285);transform-origin:0 0;">Then, the lo</span>
<span class="t" style="left:209.60px;top:13px;font-size:10px;line-height:11.49px;color:#ffffff;letter-spacing:-0.071px;transform:scaleX(0.8665);transform-origin:0 0;">The thread p</span>
<span class="t" style="left:269.50px;top:13px;font-size:10px;line-height:11.49px;color:#ffffff;letter-spacing:-0.059px;transform:scaleX(0.9475);transform-origin:0 0;">it will be assu</span>
<span class="t" style="left:337.00px;top:13px;font-size:10px;line-height:11.49px;color:#ffffff;letter-spacing:-0.066px;transform:scaleX(0.9423);transform-origin:0 0;">During t</span>
<span class="t" style="left:381.00px;top:13px;font-size:10px;line-height:11.49px;color:#ffffff;letter-spacing:-0.069px;transform:scaleX(0.9055);transform-origin:0 0;">the angle</span>
<span class="t" style="left:434.00px;top:13px;font-size:10px;line-height:11.49px;color:#ffffff;letter-spacing:-0.079px;transform:scaleX(0.9025);transform-origin:0 0;">Hence, we</span>
<span class="t" style="left:489.30px;top:13px;font-size:10px;line-height:11.49px;color:#ffffff;letter-spacing:-0.083px;transform:scaleX(0.8952);transform-origin:0 0;">a m</span>
</div>
<div style="position:absolute;left:912px;top:790px;width:501px;height:24px;background:#749cd2;"></div>
<div style="position:absolute;left:912px;top:796px;width:12.5px;height:12px;background:#c9ab72;border:1px solid #4a3c22;box-sizing:border-box;"></div>
<span class="t" style="left:914.60px;top:796px;font-size:11px;line-height:12.64px;color:#2a2010;">C</span>
<div style="position:absolute;left:934px;top:792.5px;width:12px;height:10.3px;background:#8a8a8a;border:1px solid #b0b0b0;box-sizing:border-box;"></div>
<span class="t" style="left:936.30px;top:792px;font-size:10px;line-height:11.49px;color:#222;font-style:italic;">fx</span>
<span class="t" style="left:953.00px;top:791px;font-size:10px;line-height:11.49px;color:#15253d;letter-spacing:-0.074px;transform:scaleX(0.8935);transform-origin:0 0;">Japanese Culture Programme (Science).mp4 [V]</span>
<svg style="position:absolute;left:912px;top:819px;overflow:hidden;" width="501" height="24" viewBox="0 0 501 24"><rect x="0" y="0" width="501" height="24" fill="#3e506d"/><path d="M0 12L0.0 9.5L1.0 9.4L2.0 7.4L3.0 10.4L4.0 10.1L5.0 9.0L6.0 9.0L7.0 9.5L8.0 9.7L9.0 9.6L10.0 9.6L11.0 10.3L12.0 10.2L13.0 10.1L14.0 10.0L15.0 9.2L16.0 9.1L17.0 9.4L18.0 10.2L19.0 9.3L20.0 9.3L21.0 9.5L22.0 9.1L23.0 9.1L24.0 8.6L25.0 6.5L26.0 9.8L27.0 9.5L28.0 8.7L29.0 9.1L30.0 8.5L31.0 9.2L32.0 9.1L33.0 9.2L34.0 6.9L35.0 8.9L36.0 8.8L37.0 9.2L38.0 8.1L39.0 8.8L40.0 9.1L41.0 9.2L42.0 9.7L43.0 6.6L44.0 9.7L45.0 9.5L46.0 8.5L47.0 9.6L48.0 9.5L49.0 10.0L50.0 9.8L51.0 9.6L52.0 9.1L53.0 9.8L54.0 9.0L55.0 9.2L56.0 8.9L57.0 9.4L58.0 7.7L59.0 9.1L60.0 8.8L61.0 9.1L62.0 9.5L63.0 8.6L64.0 8.9L65.0 9.2L66.0 8.8L67.0 9.0L68.0 8.5L69.0 8.6L70.0 9.8L71.0 8.7L72.0 8.3L73.0 8.9L74.0 8.7L75.0 8.7L76.0 8.6L77.0 9.4L78.0 9.4L79.0 8.8L80.0 9.2L81.0 8.9L82.0 7.0L83.0 10.1L84.0 9.7L85.0 9.8L86.0 9.2L87.0 9.7L88.0 9.2L89.0 8.5L90.0 8.9L91.0 8.9L92.0 8.3L93.0 8.1L94.0 8.0L95.0 9.3L96.0 9.5L97.0 8.7L98.0 9.0L99.0 9.0L100.0 9.1L101.0 9.0L102.0 9.9L103.0 10.2L104.0 10.2L105.0 10.2L106.0 9.5L107.0 8.8L108.0 6.8L109.0 9.9L110.0 8.8L111.0 8.9L112.0 9.7L113.0 9.2L114.0 8.6L115.0 8.7L116.0 8.9L117.0 8.3L118.0 9.0L119.0 9.7L120.0 9.7L121.0 9.6L122.0 7.7L123.0 9.5L124.0 10.0L125.0 9.8L126.0 9.7L127.0 9.7L128.0 9.6L129.0 9.9L130.0 10.5L131.0 10.1L132.0 9.6L133.0 10.1L134.0 10.0L135.0 10.2L136.0 9.4L137.0 9.3L138.0 9.6L139.0 9.8L140.0 10.0L141.0 8.2L142.0 9.8L143.0 9.4L144.0 9.4L145.0 9.4L146.0 9.4L147.0 8.4L148.0 8.8L149.0 8.0L150.0 8.2L151.0 8.0L152.0 9.0L153.0 8.5L154.0 8.7L155.0 9.4L156.0 8.7L157.0 9.1L158.0 9.3L159.0 9.0L160.0 8.4L161.0 8.2L162.0 8.2L163.0 9.0L164.0 7.1L165.0 8.8L166.0 9.1L167.0 9.0L168.0 9.0L169.0 9.0L170.0 7.6L171.0 8.8L172.0 8.6L173.0 8.1L174.0 8.5L175.0 8.7L176.0 6.6L177.0 8.8L178.0 8.9L179.0 8.7L180.0 8.8L181.0 9.3L182.0 8.5L183.0 9.3L184.0 9.9L185.0 9.1L186.0 9.7L187.0 9.2L188.0 9.3L189.0 9.1L190.0 9.1L191.0 9.0L192.0 9.0L193.0 9.7L194.0 8.7L195.0 9.4L196.0 9.6L197.0 8.9L198.0 9.1L199.0 10.0L200.0 10.0L201.0 10.2L202.0 9.3L203.0 9.6L204.0 10.2L205.0 9.7L206.0 8.7L207.0 9.6L208.0 8.8L209.0 6.9L210.0 8.8L211.0 9.3L212.0 8.5L213.0 9.5L214.0 8.8L215.0 8.7L216.0 6.0L217.0 8.6L218.0 9.7L219.0 8.9L220.0 9.4L221.0 9.8L222.0 10.0L223.0 9.2L224.0 9.7L225.0 8.8L226.0 9.4L227.0 9.7L228.0 7.2L229.0 8.9L230.0 8.6L231.0 8.5L232.0 9.2L233.0 8.9L234.0 9.1L235.0 8.6L236.0 9.2L237.0 9.2L238.0 9.2L239.0 8.5L240.0 8.7L241.0 5.3L242.0 8.5L243.0 9.3L244.0 8.2L245.0 8.8L246.0 7.9L247.0 8.7L248.0 8.8L249.0 8.7L250.0 7.7L251.0 9.0L252.0 8.3L253.0 9.1L254.0 9.0L255.0 6.3L256.0 8.4L257.0 9.3L258.0 8.1L259.0 8.9L260.0 8.9L261.0 8.0L262.0 8.6L263.0 8.2L264.0 8.5L265.0 9.7L266.0 8.6L267.0 9.1L268.0 9.2L269.0 9.5L270.0 8.9L271.0 8.6L272.0 8.9L273.0 8.4L274.0 9.2L275.0 8.6L276.0 8.2L277.0 8.6L278.0 9.1L279.0 8.0L280.0 9.1L281.0 8.5L282.0 8.9L283.0 9.1L284.0 9.0L285.0 8.8L286.0 9.1L287.0 8.5L288.0 9.3L289.0 9.5L290.0 9.0L291.0 9.4L292.0 9.7L293.0 9.2L294.0 8.6L295.0 9.3L296.0 8.3L297.0 8.8L298.0 8.9L299.0 9.3L300.0 7.1L301.0 8.6L302.0 9.1L303.0 9.5L304.0 9.4L305.0 8.1L306.0 8.5L307.0 9.5L308.0 8.6L309.0 9.3L310.0 9.2L311.0 9.2L312.0 8.9L313.0 9.5L314.0 9.4L315.0 9.3L316.0 8.9L317.0 9.1L318.0 9.0L319.0 6.4L320.0 9.2L321.0 8.8L322.0 9.2L323.0 9.3L324.0 9.4L325.0 8.9L326.0 9.7L327.0 8.7L328.0 8.3L329.0 9.1L330.0 8.2L331.0 8.7L332.0 9.5L333.0 9.0L334.0 9.7L335.0 9.3L336.0 7.3L337.0 8.7L338.0 9.3L339.0 9.1L340.0 8.8L341.0 8.7L342.0 8.7L343.0 8.9L344.0 8.8L345.0 9.1L346.0 8.6L347.0 8.3L348.0 7.4L349.0 8.9L350.0 8.6L351.0 7.5L352.0 9.8L353.0 9.4L354.0 9.5L355.0 9.3L356.0 10.5L357.0 9.4L358.0 10.4L359.0 9.9L360.0 9.2L361.0 9.3L362.0 9.8L363.0 7.2L364.0 10.0L365.0 9.5L366.0 9.6L367.0 9.9L368.0 5.9L369.0 9.0L370.0 9.3L371.0 9.7L372.0 8.7L373.0 9.1L374.0 8.5L375.0 8.9L376.0 6.8L377.0 9.1L378.0 9.4L379.0 9.6L380.0 9.0L381.0 8.9L382.0 8.3L383.0 8.5L384.0 8.7L385.0 7.2L386.0 8.5L387.0 9.2L388.0 8.4L389.0 8.8L390.0 8.3L391.0 8.6L392.0 9.2L393.0 9.6L394.0 8.6L395.0 9.0L396.0 8.7L397.0 7.2L398.0 9.0L399.0 8.8L400.0 6.7L401.0 8.8L402.0 9.0L403.0 9.2L404.0 9.6L405.0 5.9L406.0 8.5L407.0 9.0L408.0 8.5L409.0 9.0L410.0 9.3L411.0 9.0L412.0 9.3L413.0 8.7L414.0 9.5L415.0 8.6L416.0 8.7L417.0 9.1L418.0 8.8L419.0 9.5L420.0 8.7L421.0 8.7L422.0 9.3L423.0 9.8L424.0 8.9L425.0 9.8L426.0 9.8L427.0 9.0L428.0 9.3L429.0 9.3L430.0 9.7L431.0 10.0L432.0 10.1L433.0 9.0L434.0 9.2L435.0 9.2L436.0 8.9L437.0 8.7L438.0 8.0L439.0 8.0L440.0 8.4L441.0 8.8L442.0 7.9L443.0 8.5L444.0 8.5L445.0 8.5L446.0 8.1L447.0 8.3L448.0 7.7L449.0 8.6L450.0 7.9L451.0 7.8L452.0 7.7L453.0 8.3L454.0 8.0L455.0 9.2L456.0 9.3L457.0 9.3L458.0 9.0L459.0 9.6L460.0 9.6L461.0 8.7L462.0 9.0L463.0 8.9L464.0 8.2L465.0 8.7L466.0 8.7L467.0 8.9L468.0 6.4L469.0 9.3L470.0 9.1L471.0 9.0L472.0 9.2L473.0 8.0L474.0 6.4L475.0 7.8L476.0 8.7L477.0 8.4L478.0 7.6L479.0 7.6L480.0 7.3L481.0 8.0L482.0 7.4L483.0 7.5L484.0 8.3L485.0 8.3L486.0 8.3L487.0 8.7L488.0 8.1L489.0 8.2L490.0 8.3L491.0 8.3L492.0 7.2L493.0 7.5L494.0 7.9L495.0 7.6L496.0 7.7L497.0 7.9L498.0 7.6L499.0 7.6L500.0 8.3L501.0 7.6L501 12Z" fill="#709cd4"/><path d="M0 24L0.0 21.3L1.0 20.9L2.0 21.1L3.0 21.8L4.0 22.0L5.0 21.3L6.0 21.0L7.0 20.8L8.0 21.3L9.0 20.7L10.0 21.8L11.0 20.7L12.0 20.3L13.0 21.1L14.0 21.1L15.0 21.2L16.0 21.5L17.0 20.5L18.0 21.5L19.0 20.4L20.0 21.5L21.0 20.1L22.0 21.6L23.0 20.9L24.0 21.4L25.0 21.9L26.0 21.0L27.0 21.6L28.0 21.0L29.0 20.5L30.0 22.0L31.0 21.7L32.0 21.4L33.0 21.5L34.0 21.0L35.0 20.8L36.0 20.9L37.0 20.8L38.0 20.9L39.0 20.7L40.0 21.2L41.0 20.3L42.0 20.9L43.0 20.7L44.0 20.3L45.0 21.3L46.0 20.6L47.0 20.9L48.0 20.9L49.0 20.4L50.0 20.7L51.0 20.1L52.0 19.8L53.0 20.1L54.0 20.9L55.0 20.5L56.0 19.9L57.0 19.8L58.0 20.3L59.0 20.9L60.0 20.6L61.0 20.6L62.0 20.3L63.0 21.1L64.0 21.3L65.0 18.8L66.0 21.1L67.0 20.9L68.0 20.6L69.0 19.0L70.0 21.4L71.0 20.4L72.0 20.0L73.0 20.6L74.0 20.5L75.0 19.6L76.0 20.4L77.0 19.5L78.0 20.7L79.0 19.7L80.0 20.3L81.0 19.9L82.0 20.5L83.0 20.9L84.0 21.0L85.0 21.2L86.0 21.3L87.0 21.5L88.0 21.7L89.0 20.8L90.0 21.4L91.0 20.8L92.0 21.2L93.0 21.0L94.0 21.5L95.0 21.0L96.0 21.0L97.0 21.3L98.0 21.5L99.0 20.8L100.0 21.4L101.0 21.1L102.0 21.2L103.0 20.5L104.0 21.2L105.0 21.0L106.0 17.2L107.0 18.3L108.0 21.2L109.0 20.9L110.0 21.2L111.0 21.1L112.0 20.9L113.0 21.5L114.0 20.6L115.0 21.7L116.0 21.0L117.0 21.2L118.0 17.7L119.0 20.4L120.0 20.6L121.0 21.4L122.0 21.6L123.0 22.0L124.0 20.8L125.0 21.2L126.0 21.0L127.0 21.4L128.0 21.9L129.0 21.9L130.0 19.5L131.0 19.2L132.0 21.3L133.0 21.2L134.0 22.3L135.0 22.1L136.0 22.2L137.0 21.9L138.0 21.7L139.0 21.1L140.0 20.7L141.0 20.1L142.0 20.8L143.0 20.0L144.0 19.8L145.0 19.7L146.0 20.6L147.0 20.6L148.0 18.9L149.0 20.0L150.0 20.0L151.0 20.7L152.0 20.1L153.0 19.9L154.0 20.6L155.0 20.6L156.0 20.7L157.0 20.0L158.0 20.1L159.0 20.9L160.0 20.8L161.0 20.8L162.0 20.7L163.0 20.8L164.0 20.9L165.0 21.4L166.0 21.3L167.0 21.6L168.0 21.5L169.0 21.1L170.0 21.9L171.0 21.2L172.0 21.3L173.0 21.8L174.0 21.7L175.0 21.1L176.0 20.7L177.0 20.6L178.0 20.6L179.0 21.1L180.0 20.7L181.0 20.5L182.0 20.7L183.0 21.1L184.0 20.8L185.0 21.0L186.0 20.9L187.0 21.3L188.0 21.7L189.0 21.7L190.0 20.9L191.0 21.3L192.0 21.3L193.0 20.7L194.0 20.5L195.0 20.5L196.0 20.8L197.0 20.3L198.0 21.3L199.0 20.8L200.0 20.1L201.0 20.5L202.0 20.8L203.0 21.3L204.0 20.8L205.0 20.3L206.0 19.8L207.0 20.8L208.0 21.0L209.0 20.4L210.0 20.1L211.0 20.0L212.0 20.9L213.0 20.0L214.0 20.4L215.0 20.4L216.0 20.2L217.0 21.0L218.0 21.4L219.0 20.5L220.0 18.4L221.0 20.6L222.0 21.4L223.0 20.7L224.0 21.0L225.0 20.5L226.0 20.5L227.0 20.5L228.0 20.7L229.0 21.1L230.0 20.7L231.0 21.0L232.0 21.0L233.0 21.5L234.0 21.6L235.0 21.3L236.0 21.5L237.0 22.1L238.0 22.0L239.0 19.4L240.0 22.2L241.0 22.3L242.0 22.3L243.0 22.3L244.0 21.8L245.0 21.3L246.0 22.0L247.0 22.0L248.0 21.8L249.0 21.8L250.0 21.7L251.0 21.5L252.0 21.6L253.0 22.2L254.0 21.6L255.0 21.5L256.0 21.8L257.0 22.0L258.0 21.7L259.0 20.8L260.0 21.3L261.0 21.0L262.0 21.4L263.0 21.4L264.0 21.1L265.0 21.0L266.0 20.0L267.0 21.7L268.0 22.0L269.0 21.5L270.0 22.0L271.0 18.8L272.0 21.5L273.0 20.9L274.0 21.7L275.0 20.9L276.0 21.4L277.0 21.0L278.0 21.1L279.0 21.1L280.0 20.9L281.0 21.1L282.0 20.8L283.0 21.7L284.0 21.2L285.0 20.4L286.0 21.3L287.0 21.2L288.0 20.9L289.0 21.6L290.0 20.8L291.0 21.0L292.0 21.6L293.0 21.0L294.0 21.0L295.0 20.6L296.0 21.3L297.0 21.7L298.0 21.3L299.0 21.4L300.0 18.9L301.0 21.8L302.0 20.9L303.0 21.0L304.0 21.5L305.0 20.7L306.0 21.0L307.0 21.6L308.0 21.0L309.0 20.3L310.0 20.6L311.0 21.0L312.0 20.8L313.0 20.7L314.0 21.3L315.0 20.3L316.0 19.9L317.0 20.9L318.0 21.0L319.0 20.8L320.0 21.6L321.0 18.1L322.0 20.7L323.0 21.0L324.0 21.4L325.0 20.7L326.0 21.5L327.0 21.4L328.0 21.7L329.0 20.6L330.0 20.2L331.0 21.1L332.0 20.8L333.0 20.3L334.0 20.7L335.0 21.2L336.0 21.4L337.0 20.9L338.0 20.9L339.0 21.6L340.0 21.7L341.0 21.8L342.0 21.5L343.0 21.6L344.0 21.5L345.0 22.1L346.0 21.2L347.0 21.6L348.0 21.4L349.0 21.4L350.0 20.6L351.0 21.3L352.0 21.5L353.0 21.3L354.0 20.7L355.0 20.8L356.0 21.0L357.0 20.4L358.0 21.0L359.0 19.9L360.0 20.7L361.0 20.4L362.0 20.3L363.0 20.8L364.0 19.4L365.0 20.9L366.0 20.5L367.0 20.5L368.0 20.5L369.0 21.4L370.0 20.7L371.0 21.9L372.0 21.5L373.0 21.1L374.0 21.1L375.0 21.7L376.0 21.8L377.0 21.4L378.0 19.0L379.0 22.0L380.0 21.6L381.0 21.2L382.0 21.2L383.0 20.4L384.0 21.2L385.0 20.7L386.0 21.1L387.0 20.3L388.0 20.8L389.0 20.5L390.0 20.5L391.0 21.1L392.0 20.6L393.0 21.1L394.0 21.7L395.0 21.2L396.0 21.6L397.0 21.6L398.0 20.8L399.0 20.9L400.0 21.1L401.0 21.0L402.0 21.5L403.0 21.0L404.0 21.5L405.0 21.3L406.0 21.0L407.0 21.4L408.0 20.6L409.0 20.1L410.0 21.2L411.0 20.4L412.0 21.0L413.0 20.8L414.0 21.4L415.0 21.0L416.0 21.0L417.0 21.8L418.0 20.5L419.0 20.8L420.0 21.7L421.0 21.6L422.0 21.1L423.0 20.9L424.0 20.9L425.0 20.7L426.0 20.8L427.0 21.5L428.0 18.9L429.0 20.4L430.0 20.8L431.0 21.3L432.0 21.1L433.0 20.8L434.0 21.9L435.0 18.8L436.0 20.8L437.0 21.4L438.0 21.5L439.0 21.2L440.0 21.5L441.0 21.6L442.0 20.8L443.0 21.8L444.0 21.8L445.0 21.1L446.0 21.2L447.0 20.7L448.0 21.0L449.0 21.6L450.0 21.5L451.0 21.1L452.0 21.1L453.0 20.5L454.0 20.7L455.0 21.8L456.0 21.5L457.0 20.9L458.0 21.1L459.0 20.9L460.0 18.6L461.0 18.3L462.0 21.2L463.0 20.9L464.0 21.6L465.0 21.5L466.0 21.7L467.0 21.7L468.0 20.7L469.0 20.8L470.0 21.5L471.0 21.9L472.0 21.4L473.0 22.0L474.0 21.2L475.0 20.5L476.0 21.0L477.0 20.4L478.0 21.2L479.0 21.3L480.0 20.7L481.0 20.9L482.0 20.5L483.0 21.1L484.0 20.6L485.0 17.5L486.0 20.7L487.0 20.7L488.0 20.4L489.0 20.3L490.0 20.5L491.0 20.6L492.0 20.0L493.0 20.4L494.0 21.1L495.0 20.6L496.0 20.8L497.0 20.3L498.0 19.6L499.0 20.7L500.0 20.8L501.0 21.0L501 24Z" fill="#709cd4"/></svg>
<svg style="position:absolute;left:793px;top:869.5px;overflow:hidden;" width="118" height="24" viewBox="0 0 118 24"><rect x="0" y="0" width="118" height="24" fill="#3e506d"/><path d="M0 12L0.0 5.8L1.0 6.0L2.0 6.2L3.0 7.3L4.0 5.3L5.0 5.1L6.0 6.1L7.0 4.9L8.0 8.4L9.0 5.8L10.0 6.7L11.0 7.4L12.0 5.2L13.0 7.2L14.0 5.8L15.0 6.7L16.0 7.7L17.0 5.9L18.0 7.2L19.0 4.4L20.0 2.7L21.0 7.1L22.0 5.8L23.0 5.4L24.0 7.3L25.0 7.0L26.0 6.7L27.0 6.6L28.0 7.4L29.0 7.1L30.0 5.4L31.0 7.1L32.0 6.5L33.0 6.1L34.0 7.7L35.0 7.1L36.0 4.7L37.0 4.5L38.0 4.2L39.0 5.4L40.0 5.5L41.0 3.5L42.0 4.9L43.0 4.8L44.0 7.2L45.0 7.8L46.0 7.8L47.0 4.8L48.0 5.9L49.0 8.0L50.0 2.4L51.0 5.5L52.0 7.3L53.0 4.5L54.0 4.7L55.0 5.2L56.0 5.8L57.0 5.1L58.0 5.2L59.0 5.3L60.0 4.8L61.0 5.1L62.0 6.5L63.0 5.3L64.0 5.2L65.0 4.4L66.0 6.8L67.0 7.4L68.0 6.4L69.0 5.8L70.0 5.3L71.0 6.4L72.0 7.3L73.0 4.8L74.0 6.3L75.0 6.4L76.0 5.3L77.0 4.8L78.0 4.5L79.0 5.6L80.0 3.7L81.0 7.9L82.0 5.2L83.0 6.1L84.0 4.8L85.0 6.5L86.0 6.9L87.0 7.7L88.0 6.7L89.0 6.8L90.0 7.5L91.0 7.2L92.0 4.6L93.0 4.6L94.0 5.7L95.0 5.1L96.0 5.0L97.0 3.9L98.0 4.5L99.0 4.1L100.0 5.8L101.0 2.8L102.0 4.8L103.0 5.0L104.0 6.1L105.0 5.3L106.0 2.7L107.0 6.6L108.0 5.8L109.0 6.4L110.0 4.3L111.0 3.9L112.0 6.3L113.0 2.1L114.0 5.8L115.0 5.5L116.0 5.7L117.0 4.1L118.0 6.7L118 12Z" fill="#709cd4"/><path d="M0 24L0.0 16.5L1.0 18.9L2.0 18.8L3.0 19.0L4.0 18.4L5.0 19.1L6.0 18.0L7.0 18.2L8.0 18.6L9.0 19.5L10.0 18.3L11.0 17.2L12.0 17.1L13.0 18.8L14.0 16.8L15.0 19.5L16.0 20.0L17.0 17.8L18.0 16.4L19.0 17.2L20.0 18.8L21.0 18.1L22.0 17.9L23.0 18.7L24.0 20.0L25.0 15.6L26.0 18.4L27.0 18.4L28.0 15.5L29.0 19.1L30.0 18.2L31.0 15.3L32.0 17.3L33.0 18.2L34.0 16.3L35.0 16.7L36.0 16.8L37.0 16.4L38.0 16.6L39.0 18.7L40.0 19.0L41.0 16.9L42.0 16.6L43.0 16.8L44.0 15.6L45.0 16.3L46.0 17.2L47.0 16.3L48.0 19.1L49.0 17.4L50.0 17.1L51.0 13.9L52.0 18.6L53.0 17.5L54.0 14.2L55.0 17.5L56.0 18.4L57.0 18.4L58.0 19.4L59.0 19.3L60.0 17.0L61.0 17.0L62.0 17.5L63.0 17.2L64.0 17.3L65.0 17.1L66.0 19.7L67.0 17.2L68.0 18.9L69.0 19.5L70.0 17.8L71.0 16.8L72.0 19.7L73.0 17.8L74.0 17.8L75.0 17.8L76.0 19.3L77.0 15.3L78.0 18.5L79.0 16.8L80.0 18.2L81.0 18.5L82.0 17.7L83.0 20.0L84.0 17.8L85.0 19.4L86.0 18.2L87.0 18.6L88.0 18.6L89.0 15.8L90.0 18.6L91.0 15.9L92.0 19.8L93.0 17.7L94.0 19.0L95.0 19.8L96.0 17.1L97.0 18.3L98.0 18.8L99.0 16.7L100.0 18.5L101.0 18.5L102.0 17.1L103.0 17.6L104.0 16.4L105.0 18.0L106.0 16.5L107.0 19.1L108.0 16.3L109.0 18.7L110.0 16.8L111.0 18.7L112.0 17.0L113.0 16.5L114.0 17.8L115.0 16.5L116.0 17.1L117.0 16.4L118.0 16.7L118 24Z" fill="#709cd4"/></svg>
<div style="position:absolute;left:793px;top:869.5px;width:118px;height:0.8px;background:#5b7fb4;"></div>
<div style="position:absolute;left:921px;top:821.3px;width:12px;height:10.3px;background:#c8a6f0;border:1px solid #e0cff8;box-sizing:border-box;"></div>
<span class="t" style="left:923.30px;top:821px;font-size:10px;line-height:11.49px;color:#4a1f7a;font-style:italic;">fx</span>
<div style="position:absolute;left:1104px;top:638px;width:1.3px;height:356px;background:#2d8ceb;"></div>
<svg style="position:absolute;left:1098.5px;top:627px;" width="12" height="12" viewBox="0 0 12 12"><path d="M0.3 0h11v6.800l-4 4.800h-3l-4-4.800z" fill="#2d8ceb"/></svg>
<div style="position:absolute;left:1413.8px;top:645.4px;width:10px;height:168.60000000000002px;background:#2e2e2e;border-radius:5px;"></div>
<svg style="position:absolute;left:1413px;top:645.4px;" width="12" height="12" viewBox="0 0 12 12"><circle cx="6" cy="6" r="3.9" fill="#232323" stroke="#b4b4b4" stroke-width="1.7"/></svg>
<svg style="position:absolute;left:1413px;top:802px;" width="12" height="12" viewBox="0 0 12 12"><circle cx="6" cy="6" r="3.9" fill="#232323" stroke="#b4b4b4" stroke-width="1.7"/></svg>
<div style="position:absolute;left:1413.8px;top:819px;width:10px;height:171.60000000000002px;background:#2e2e2e;border-radius:5px;"></div>
<svg style="position:absolute;left:1413px;top:819px;" width="12" height="12" viewBox="0 0 12 12"><circle cx="6" cy="6" r="3.9" fill="#232323" stroke="#b4b4b4" stroke-width="1.7"/></svg>
<svg style="position:absolute;left:1413px;top:978.6px;" width="12" height="12" viewBox="0 0 12 12"><circle cx="6" cy="6" r="3.9" fill="#232323" stroke="#b4b4b4" stroke-width="1.7"/></svg>
<div style="position:absolute;left:570px;top:994.05px;width:843px;height:10.5px;background:#2e2e2e;border-radius:5.25px;"></div>
<svg style="position:absolute;left:590px;top:993.3px;" width="12" height="12" viewBox="0 0 12 12"><circle cx="6" cy="6" r="3.9" fill="#232323" stroke="#b4b4b4" stroke-width="1.7"/></svg>
<svg style="position:absolute;left:797px;top:993.3px;" width="12" height="12" viewBox="0 0 12 12"><circle cx="6" cy="6" r="3.9" fill="#232323" stroke="#b4b4b4" stroke-width="1.7"/></svg>
<div style="position:absolute;left:1457px;top:597px;width:61px;height:383px;background:#1d1d1d;border:1px solid #000;box-sizing:border-box;"></div>
<div style="position:absolute;left:1457px;top:606px;width:61px;height:1px;background:#000;"></div>
<div style="position:absolute;left:1487px;top:597px;width:1px;height:10px;background:#000;"></div>
<div style="position:absolute;left:1487px;top:607px;width:1px;height:372px;background:#191919;"></div>
<div style="position:absolute;left:1458px;top:977.5px;width:29px;height:1.5px;background:#e0d814;"></div>
<div style="position:absolute;left:1488px;top:977.5px;width:29px;height:1.5px;background:#e0d814;"></div>
<svg style="position:absolute;left:0px;top:0px;pointer-events:none;" width="1920" height="1040" viewBox="0 0 1920 1040"><path d="M1518.5 608.5h4M1518.5 614.7h2M1518.5 620.8h2M1518.5 627.0h2M1518.5 633.2h2M1518.5 639.3h2M1518.5 645.5h4M1518.5 651.7h2M1518.5 657.8h2M1518.5 664.0h2M1518.5 670.2h2M1518.5 676.3h2M1518.5 682.5h4M1518.5 688.7h2M1518.5 694.8h2M1518.5 701.0h2M1518.5 707.2h2M1518.5 713.3h2M1518.5 719.5h4M1518.5 725.7h2M1518.5 731.8h2M1518.5 738.0h2M1518.5 744.2h2M1518.5 750.3h2M1518.5 756.5h4M1518.5 762.7h2M1518.5 768.8h2M1518.5 775.0h2M1518.5 781.2h2M1518.5 787.3h2M1518.5 793.5h4M1518.5 799.7h2M1518.5 805.8h2M1518.5 812.0h2M1518.5 818.2h2M1518.5 824.3h2M1518.5 830.5h4M1518.5 836.7h2M1518.5 842.8h2M1518.5 849.0h2M1518.5 855.2h2M1518.5 861.3h2M1518.5 867.5h4M1518.5 873.7h2M1518.5 879.8h2M1518.5 886.0h2M1518.5 892.2h2M1518.5 898.3h2M1518.5 904.5h4M1518.5 910.7h2M1518.5 916.8h2M1518.5 923.0h2M1518.5 929.2h2M1518.5 935.3h2M1518.5 941.5h4M1518.5 947.7h2M1518.5 953.8h2M1518.5 960.0h2M1518.5 966.2h2M1518.5 972.3h2M1518.5 978.5h4" stroke="#7a7a7a" stroke-width="1" fill="none"/></svg>
<span class="t" style="left:1525.30px;top:603px;font-size:9.5px;line-height:10.92px;color:#9a9a9a;">0</span>
<span class="t" style="left:1525.30px;top:640px;font-size:9.5px;line-height:10.92px;color:#9a9a9a;">-6</span>
<span class="t" style="left:1525.30px;top:677px;font-size:9.5px;line-height:10.92px;color:#9a9a9a;">-12</span>
<span class="t" style="left:1525.30px;top:714px;font-size:9.5px;line-height:10.92px;color:#9a9a9a;">-18</span>
<span class="t" style="left:1525.30px;top:751px;font-size:9.5px;line-height:10.92px;color:#9a9a9a;">-24</span>
<span class="t" style="left:1525.30px;top:788px;font-size:9.5px;line-height:10.92px;color:#9a9a9a;">-30</span>
<span class="t" style="left:1525.30px;top:826px;font-size:9.5px;line-height:10.92px;color:#9a9a9a;">-36</span>
<span class="t" style="left:1525.30px;top:863px;font-size:9.5px;line-height:10.92px;color:#9a9a9a;">-42</span>
<span class="t" style="left:1525.30px;top:900px;font-size:9.5px;line-height:10.92px;color:#9a9a9a;">-48</span>
<span class="t" style="left:1525.30px;top:937px;font-size:9.5px;line-height:10.92px;color:#9a9a9a;">-54</span>
<span class="t" style="left:1526.00px;top:972px;font-size:9.5px;line-height:10.92px;color:#9a9a9a;">dB</span>
<div style="position:absolute;left:1463px;top:986px;width:17.5px;height:16px;background:#1e1e1e;border:1px solid #3a3a3a;border-radius:2px;box-sizing:border-box;"></div>
<span class="t" style="left:1468.70px;top:990px;font-size:9.5px;line-height:10.92px;color:#b4b4b4;">S</span>
<div style="position:absolute;left:1493.5px;top:986px;width:17.5px;height:16px;background:#1e1e1e;border:1px solid #3a3a3a;border-radius:2px;box-sizing:border-box;"></div>
<span class="t" style="left:1499.20px;top:990px;font-size:9.5px;line-height:10.92px;color:#b4b4b4;">S</span>
</body></html>
